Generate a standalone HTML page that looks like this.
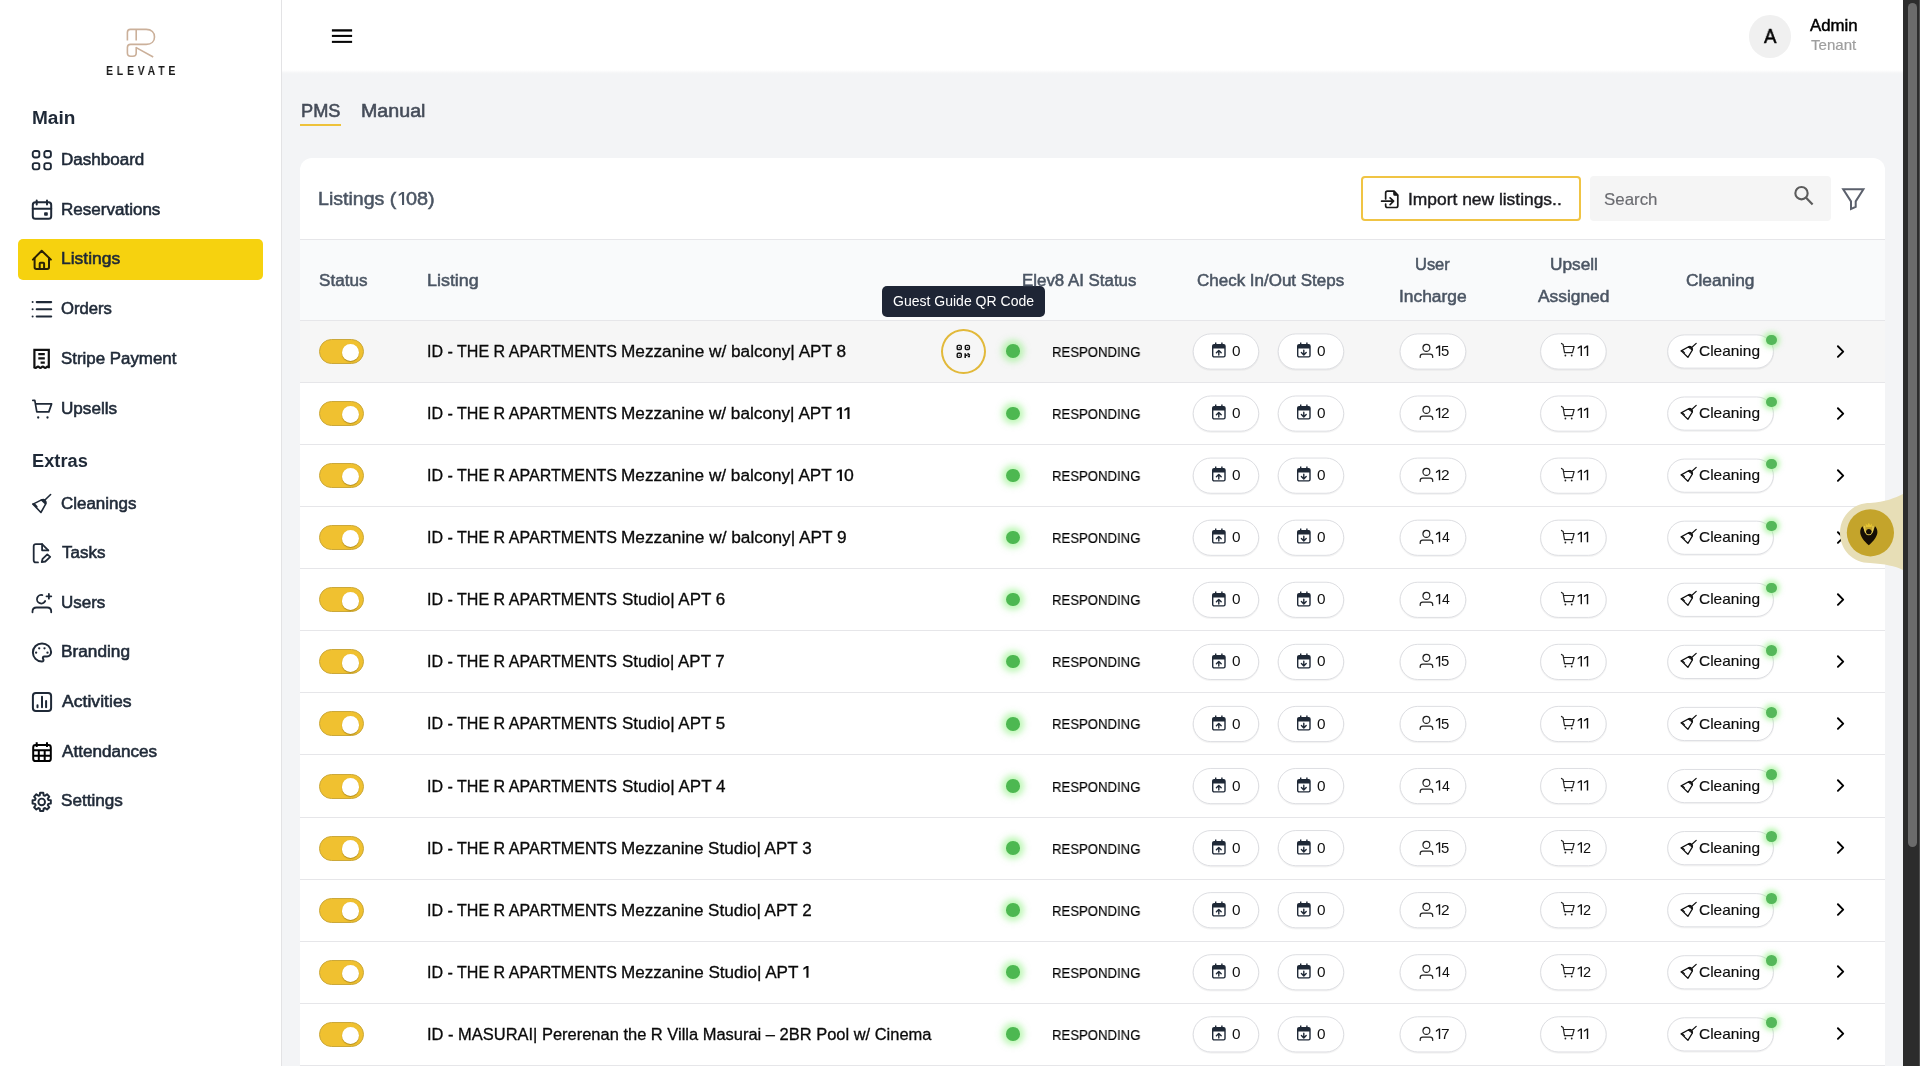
<!DOCTYPE html>
<html lang="en"><head><meta charset="utf-8"><title>Listings</title>
<style>
html,body{margin:0;padding:0;}
body{width:1920px;height:1066px;overflow:hidden;background:#f3f4f6;font-family:"Liberation Sans",sans-serif;}
#root{position:relative;width:1920px;height:1066px;overflow:hidden;background:#f3f4f6;}
.t{position:absolute;white-space:pre;transform-origin:0 0;will-change:transform;font-family:"Liberation Sans",sans-serif;}
.a{position:absolute;}
.pill{position:absolute;box-sizing:border-box;border:1px solid #dfe0e4;border-radius:20px;background:#fff;box-shadow:0 1px 2px rgba(0,0,0,.06);}
.tog{position:absolute;box-sizing:border-box;width:45px;height:25px;border-radius:13px;background:#f0c130;border:1px solid #cba83a;}
.knob{position:absolute;width:17.5px;height:17.5px;border-radius:50%;background:#fff;box-shadow:0 1px 1px rgba(120,90,0,.5);}
.dot{position:absolute;width:13.6px;height:13.6px;border-radius:50%;background:#4db851;box-shadow:0 0 6px 4px rgba(125,240,110,.5);}
.sdot{position:absolute;width:10.6px;height:10.6px;border-radius:50%;background:#55b85a;box-shadow:0 0 5px 3px rgba(125,240,110,.5);}
svg{position:absolute;overflow:visible;}

</style></head>
<body>
<div id="root">
<div class="a" style="left:0;top:0;width:281px;height:1066px;background:#fff;"></div>
<div class="a" style="left:281px;top:0;width:1px;height:1066px;background:#e3e3e5;"></div>
<div class="a" style="left:282px;top:0;width:1621px;height:70px;background:#fff;"></div>
<div class="a" style="left:282px;top:70px;width:1621px;height:4px;background:linear-gradient(#fff,#fbfbfc 30%,#f5f6f7 70%,#f3f4f6);"></div>
<div class="a" style="left:1903px;top:0;width:17px;height:1066px;background:#2c2c2c;"></div>
<div class="a" style="left:1919px;top:0;width:1px;height:1066px;background:#4f4f4f;"></div>
<div class="a" style="left:1908px;top:3px;width:8.5px;height:844px;background:#6b6b6b;border-radius:4.5px;"></div>
<svg style="left:0;top:0" width="400" height="60" viewBox="0 0 400 60"><rect x="331.9" y="29.25" width="20.2" height="2.3" fill="#050505"/><rect x="331.9" y="34.9" width="20.2" height="2.05" fill="#050505"/><rect x="331.9" y="40.85" width="20.2" height="2.05" fill="#050505"/></svg>
<div class="a" style="left:1748.5px;top:15px;width:42.5px;height:42.5px;border-radius:50%;background:#f0f0f0;"></div>
<div class="a" style="left:300px;top:124px;width:41px;height:2px;background:#eec23a;"></div>
<div class="a" style="left:300px;top:158px;width:1585px;height:920px;background:#fff;border-radius:12px;"></div>
<div class="a" style="left:300px;top:239px;width:1585px;height:1px;background:#e6e6e9;"></div>
<div class="a" style="left:300px;top:240px;width:1585px;height:80px;background:#f9fafb;"></div>
<div class="a" style="left:300px;top:320px;width:1585px;height:1px;background:#e6e6e9;"></div>
<div class="a" style="left:1360.6px;top:176.4px;width:220.2px;height:44.4px;box-sizing:border-box;border:2px solid #f0c444;border-radius:4px;background:#fff;"></div>
<div class="a" style="left:1590px;top:176.2px;width:240.5px;height:44.6px;border-radius:4px;background:#f5f5f5;"></div>
<div class="a" style="left:18px;top:239.3px;width:245px;height:40.7px;border-radius:5px;background:#f6d20f;"></div>
<svg style="left:32.00px;top:150.00px" width="20" height="20" viewBox="0 0 20 20" fill="none" stroke-linecap="round" stroke-linejoin="round" ><rect x="0.75" y="0.95" width="6.6" height="6.5" rx="2.1" stroke="#1f2937" stroke-width="1.9"/><rect x="0.75" y="13.1" width="6.6" height="6.3" rx="2.1" stroke="#1f2937" stroke-width="1.9"/><rect x="12.3" y="0.95" width="6.6" height="6.5" rx="2.1" stroke="#1f2937" stroke-width="1.9"/><rect x="12.3" y="13.1" width="6.6" height="6.3" rx="2.1" stroke="#1f2937" stroke-width="1.9"/></svg>
<svg style="left:32.00px;top:199.70px" width="20" height="20" viewBox="0 0 20 20" fill="none" stroke-linecap="round" stroke-linejoin="round" ><rect x="0.8" y="2.3" width="18.4" height="16.5" rx="2.6" stroke="#1f2937" stroke-width="2"/><path d="M0.8 8.7H19.2M4.7 0.6V4.6M15 0.6V4.6" stroke="#1f2937" stroke-width="2"/><rect x="12.1" y="12.2" width="3.7" height="3.6" rx="0.8" fill="#1f2937"/></svg>
<svg style="left:32.00px;top:249.40px" width="20" height="20" viewBox="0 0 20 20" fill="none" stroke-linecap="round" stroke-linejoin="round" ><g transform="translate(0,0.9)"><path d="M0.9 9.7L9.7 0.9L18.9 9.7" stroke="#2a2105" stroke-width="2"/><path d="M2.6 8.2V17.3Q2.6 19.1 4.4 19.1H15.2Q17 19.1 17 17.3V8.2" stroke="#2a2105" stroke-width="2"/><path d="M7.7 19V13.6Q7.7 12.8 8.5 12.8H11.3Q12.1 12.8 12.1 13.6V19" stroke="#2a2105" stroke-width="2"/></g></svg>
<svg style="left:32.00px;top:299.10px" width="20" height="20" viewBox="0 0 20 20" fill="none" stroke-linecap="round" stroke-linejoin="round" ><path d="M4.7 3.1H19.2" stroke="#1f2937" stroke-width="2.05"/><circle cx="0.6" cy="3.1" r="1.0" fill="#1f2937"/><path d="M4.7 10.2H19.2" stroke="#1f2937" stroke-width="2.05"/><circle cx="0.6" cy="10.2" r="1.0" fill="#1f2937"/><path d="M4.7 17.4H19.2" stroke="#1f2937" stroke-width="2.05"/><circle cx="0.6" cy="17.4" r="1.0" fill="#1f2937"/></svg>
<svg style="left:32.00px;top:348.80px" width="20" height="20" viewBox="0 0 20 20" fill="none" stroke-linecap="round" stroke-linejoin="round" ><path d="M2.4 19.2V0.9H16.8V19.2" stroke="#111" stroke-width="2.2" stroke-linejoin="miter" stroke-linecap="butt"/><path d="M2.4 18.3Q3.6 19.6 4.8 18.3Q6 17 7.2 18.3Q8.4 19.6 9.6 18.3Q10.8 17 12 18.3Q13.2 19.6 14.4 18.3Q15.6 17 16.8 18.3" stroke="#111" stroke-width="2.2" stroke-linejoin="miter" stroke-linecap="butt"/><path d="M6.3 5.2H12.8M6.3 9.4H12.8M8.6 13.6H12.8" stroke="#111" stroke-width="2.2" stroke-linejoin="miter" stroke-linecap="butt"/></svg>
<svg style="left:32.00px;top:398.50px" width="20" height="20" viewBox="0 0 20 20" fill="none" stroke-linecap="round" stroke-linejoin="round" ><path d="M0.8 1.3H2.8L4.8 12.9H16.8L19.6 4.9H3.5" stroke="#1f2937" stroke-width="1.7"/><circle cx="6.2" cy="18.5" r="1.15" fill="#1f2937"/><circle cx="15.5" cy="18.5" r="1.15" fill="#1f2937"/></svg>
<svg style="left:32.00px;top:493.30px" width="20" height="20" viewBox="0 0 20 20" fill="none" stroke-linecap="round" stroke-linejoin="round" ><path d="M18.6 1.5L12.7 7.3" stroke="#1f2937" stroke-width="1.6"/><path d="M1 11.1L9.6 6.9Q11.6 5.8 13 7.6Q14.6 9.4 13.6 11.2L8.9 19.5Z" stroke="#1f2937" stroke-width="1.6"/><path d="M9.4 6.9Q12.2 6 13.4 10.6Z" fill="#1f2937" stroke="#1f2937" stroke-width="1.6"/><path d="M1 11.1Q3.8 11.4 4.9 13.8" stroke="#1f2937" stroke-width="1.6"/></svg>
<svg style="left:32.00px;top:543.00px" width="20" height="20" viewBox="0 0 20 20" fill="none" stroke-linecap="round" stroke-linejoin="round" ><path d="M6 19.4H3.9Q1.7 19.4 1.7 17.2V3.3Q1.7 1.1 3.9 1.1H10.1L16.3 7.3" stroke="#1f2937" stroke-width="1.8"/><path d="M10.1 1.1V7.3H16.3" stroke="#1f2937" stroke-width="1.8"/><path d="M9.7 19.2L10.6 15.8L15.3 11.4L18.2 13.9L13.3 18.5Z" stroke="#1f2937" stroke-width="1.8"/></svg>
<svg style="left:32.00px;top:592.70px" width="20" height="20" viewBox="0 0 20 20" fill="none" stroke-linecap="round" stroke-linejoin="round" ><path d="M10.4 2.05A4.3 4.3 0 1 0 13.2 8" stroke="#1f2937" stroke-width="1.8"/><path d="M16.9 0.9V5.7M14.5 3.3H19.3" stroke="#1f2937" stroke-width="1.8"/><path d="M0.5 19.3V18.6Q0.5 14.5 4.6 14.5H15.1Q19.2 14.5 19.2 18.6V19.3" stroke="#1f2937" stroke-width="1.8"/></svg>
<svg style="left:32.00px;top:642.40px" width="20" height="20" viewBox="0 0 20 20" fill="none" stroke-linecap="round" stroke-linejoin="round" ><g transform="translate(0,0.5)"><path d="M10 0.9C4.9 0.9 0.9 4.9 0.9 10C0.9 15 4.9 19.1 9.8 19.1C11.4 19.1 11.9 17.6 11.2 16.6C10.3 15.3 11 14 12.5 14H15C17.5 14 19.1 12 19.1 9.6C19.1 4.6 15 0.9 10 0.9Z" stroke="#1f2937" stroke-width="2"/><circle cx="7.2" cy="5.8" r="1.15" fill="#1f2937"/><circle cx="12.5" cy="5.8" r="1.15" fill="#1f2937"/><circle cx="4.1" cy="10.2" r="1.15" fill="#1f2937"/><circle cx="15.5" cy="10.2" r="1.15" fill="#1f2937"/></g></svg>
<svg style="left:32.00px;top:692.10px" width="20" height="20" viewBox="0 0 20 20" fill="none" stroke-linecap="round" stroke-linejoin="round" ><rect x="0.9" y="0.9" width="18.2" height="18.2" rx="3" stroke="#1f2937" stroke-width="2"/><path d="M5.5 13.3V15.3M10 4.8V15.3M14.1 9V15.3" stroke="#1f2937" stroke-width="2"/></svg>
<svg style="left:32.00px;top:741.80px" width="20" height="20" viewBox="0 0 20 20" fill="none" stroke-linecap="round" stroke-linejoin="round" ><rect x="1.2" y="3.1" width="17.6" height="16" rx="2.4" stroke="#000" stroke-width="2" stroke-linecap="butt"/><path d="M4.7 0.2V5M15 0.2V5M1.2 8.2H18.8M1.2 13.7H18.8M6.8 8.2V19M12.7 8.2V19" stroke="#000" stroke-width="2" stroke-linecap="butt"/></svg>
<svg style="left:32.00px;top:791.50px" width="20" height="20" viewBox="0 0 20 20" fill="none" stroke-linecap="round" stroke-linejoin="round" ><path d="M8.10 0.74L11.30 0.74L11.63 3.27L13.02 3.85L15.05 2.29L17.31 4.55L15.75 6.58L16.33 7.97L18.86 8.30L18.86 11.50L16.33 11.83L15.75 13.22L17.31 15.25L15.05 17.51L13.02 15.95L11.63 16.53L11.30 19.06L8.10 19.06L7.77 16.53L6.38 15.95L4.35 17.51L2.09 15.25L3.65 13.22L3.07 11.83L0.54 11.50L0.54 8.30L3.07 7.97L3.65 6.58L2.09 4.55L4.35 2.29L6.38 3.85L7.77 3.27Z" stroke="#1f2937" stroke-width="1.9"/><circle cx="9.7" cy="9.9" r="3.3" stroke="#1f2937" stroke-width="1.9"/></svg>
<svg style="left:0.00px;top:0.00px" width="200" height="70" viewBox="0 0 200 70" fill="none" stroke-linecap="round" stroke-linejoin="round" ><path d="M127.4 40.4V32.4Q127.4 29.4 130.4 29.4H146.2C151.6 29.4 154.5 32.6 154.5 36.9C154.5 41.2 151.6 44.4 146.2 44.4H130.6Q127.4 44.4 127.4 47.6V53Q127.4 56.3 130.7 56.3H132.9Q136.2 56.3 136.2 53V47.6L153.2 57M136.2 29.4V40.4" stroke="#cbb09a" stroke-width="1.6" stroke-linecap="butt"/></svg>
<div class="a" style="left:300px;top:321px;width:1585px;height:61px;background:#f6f6f6;"></div>
<svg style="left:0;top:0" width="1920" height="1066" viewBox="0 0 1920 1066"><rect x="1193.20" y="334.80" width="65.50" height="35.20" rx="17.60" fill="none" stroke="#000" stroke-opacity="0.045" stroke-width="1.6"/><rect x="1278.20" y="334.80" width="65.50" height="35.20" rx="17.60" fill="none" stroke="#000" stroke-opacity="0.045" stroke-width="1.6"/><rect x="1400.10" y="334.80" width="65.70" height="35.20" rx="17.60" fill="none" stroke="#000" stroke-opacity="0.045" stroke-width="1.6"/><rect x="1540.60" y="334.80" width="65.60" height="35.20" rx="17.60" fill="none" stroke="#000" stroke-opacity="0.045" stroke-width="1.6"/><rect x="1667.70" y="335.80" width="105.70" height="33.20" rx="16.60" fill="none" stroke="#000" stroke-opacity="0.045" stroke-width="1.6"/><rect x="1193.20" y="396.88" width="65.50" height="35.20" rx="17.60" fill="none" stroke="#000" stroke-opacity="0.045" stroke-width="1.6"/><rect x="1278.20" y="396.88" width="65.50" height="35.20" rx="17.60" fill="none" stroke="#000" stroke-opacity="0.045" stroke-width="1.6"/><rect x="1400.10" y="396.88" width="65.70" height="35.20" rx="17.60" fill="none" stroke="#000" stroke-opacity="0.045" stroke-width="1.6"/><rect x="1540.60" y="396.88" width="65.60" height="35.20" rx="17.60" fill="none" stroke="#000" stroke-opacity="0.045" stroke-width="1.6"/><rect x="1667.70" y="397.88" width="105.70" height="33.20" rx="16.60" fill="none" stroke="#000" stroke-opacity="0.045" stroke-width="1.6"/><rect x="1193.20" y="458.96" width="65.50" height="35.20" rx="17.60" fill="none" stroke="#000" stroke-opacity="0.045" stroke-width="1.6"/><rect x="1278.20" y="458.96" width="65.50" height="35.20" rx="17.60" fill="none" stroke="#000" stroke-opacity="0.045" stroke-width="1.6"/><rect x="1400.10" y="458.96" width="65.70" height="35.20" rx="17.60" fill="none" stroke="#000" stroke-opacity="0.045" stroke-width="1.6"/><rect x="1540.60" y="458.96" width="65.60" height="35.20" rx="17.60" fill="none" stroke="#000" stroke-opacity="0.045" stroke-width="1.6"/><rect x="1667.70" y="459.96" width="105.70" height="33.20" rx="16.60" fill="none" stroke="#000" stroke-opacity="0.045" stroke-width="1.6"/><rect x="1193.20" y="521.04" width="65.50" height="35.20" rx="17.60" fill="none" stroke="#000" stroke-opacity="0.045" stroke-width="1.6"/><rect x="1278.20" y="521.04" width="65.50" height="35.20" rx="17.60" fill="none" stroke="#000" stroke-opacity="0.045" stroke-width="1.6"/><rect x="1400.10" y="521.04" width="65.70" height="35.20" rx="17.60" fill="none" stroke="#000" stroke-opacity="0.045" stroke-width="1.6"/><rect x="1540.60" y="521.04" width="65.60" height="35.20" rx="17.60" fill="none" stroke="#000" stroke-opacity="0.045" stroke-width="1.6"/><rect x="1667.70" y="522.04" width="105.70" height="33.20" rx="16.60" fill="none" stroke="#000" stroke-opacity="0.045" stroke-width="1.6"/><rect x="1193.20" y="583.12" width="65.50" height="35.20" rx="17.60" fill="none" stroke="#000" stroke-opacity="0.045" stroke-width="1.6"/><rect x="1278.20" y="583.12" width="65.50" height="35.20" rx="17.60" fill="none" stroke="#000" stroke-opacity="0.045" stroke-width="1.6"/><rect x="1400.10" y="583.12" width="65.70" height="35.20" rx="17.60" fill="none" stroke="#000" stroke-opacity="0.045" stroke-width="1.6"/><rect x="1540.60" y="583.12" width="65.60" height="35.20" rx="17.60" fill="none" stroke="#000" stroke-opacity="0.045" stroke-width="1.6"/><rect x="1667.70" y="584.12" width="105.70" height="33.20" rx="16.60" fill="none" stroke="#000" stroke-opacity="0.045" stroke-width="1.6"/><rect x="1193.20" y="645.20" width="65.50" height="35.20" rx="17.60" fill="none" stroke="#000" stroke-opacity="0.045" stroke-width="1.6"/><rect x="1278.20" y="645.20" width="65.50" height="35.20" rx="17.60" fill="none" stroke="#000" stroke-opacity="0.045" stroke-width="1.6"/><rect x="1400.10" y="645.20" width="65.70" height="35.20" rx="17.60" fill="none" stroke="#000" stroke-opacity="0.045" stroke-width="1.6"/><rect x="1540.60" y="645.20" width="65.60" height="35.20" rx="17.60" fill="none" stroke="#000" stroke-opacity="0.045" stroke-width="1.6"/><rect x="1667.70" y="646.20" width="105.70" height="33.20" rx="16.60" fill="none" stroke="#000" stroke-opacity="0.045" stroke-width="1.6"/><rect x="1193.20" y="707.28" width="65.50" height="35.20" rx="17.60" fill="none" stroke="#000" stroke-opacity="0.045" stroke-width="1.6"/><rect x="1278.20" y="707.28" width="65.50" height="35.20" rx="17.60" fill="none" stroke="#000" stroke-opacity="0.045" stroke-width="1.6"/><rect x="1400.10" y="707.28" width="65.70" height="35.20" rx="17.60" fill="none" stroke="#000" stroke-opacity="0.045" stroke-width="1.6"/><rect x="1540.60" y="707.28" width="65.60" height="35.20" rx="17.60" fill="none" stroke="#000" stroke-opacity="0.045" stroke-width="1.6"/><rect x="1667.70" y="708.28" width="105.70" height="33.20" rx="16.60" fill="none" stroke="#000" stroke-opacity="0.045" stroke-width="1.6"/><rect x="1193.20" y="769.36" width="65.50" height="35.20" rx="17.60" fill="none" stroke="#000" stroke-opacity="0.045" stroke-width="1.6"/><rect x="1278.20" y="769.36" width="65.50" height="35.20" rx="17.60" fill="none" stroke="#000" stroke-opacity="0.045" stroke-width="1.6"/><rect x="1400.10" y="769.36" width="65.70" height="35.20" rx="17.60" fill="none" stroke="#000" stroke-opacity="0.045" stroke-width="1.6"/><rect x="1540.60" y="769.36" width="65.60" height="35.20" rx="17.60" fill="none" stroke="#000" stroke-opacity="0.045" stroke-width="1.6"/><rect x="1667.70" y="770.36" width="105.70" height="33.20" rx="16.60" fill="none" stroke="#000" stroke-opacity="0.045" stroke-width="1.6"/><rect x="1193.20" y="831.44" width="65.50" height="35.20" rx="17.60" fill="none" stroke="#000" stroke-opacity="0.045" stroke-width="1.6"/><rect x="1278.20" y="831.44" width="65.50" height="35.20" rx="17.60" fill="none" stroke="#000" stroke-opacity="0.045" stroke-width="1.6"/><rect x="1400.10" y="831.44" width="65.70" height="35.20" rx="17.60" fill="none" stroke="#000" stroke-opacity="0.045" stroke-width="1.6"/><rect x="1540.60" y="831.44" width="65.60" height="35.20" rx="17.60" fill="none" stroke="#000" stroke-opacity="0.045" stroke-width="1.6"/><rect x="1667.70" y="832.44" width="105.70" height="33.20" rx="16.60" fill="none" stroke="#000" stroke-opacity="0.045" stroke-width="1.6"/><rect x="1193.20" y="893.52" width="65.50" height="35.20" rx="17.60" fill="none" stroke="#000" stroke-opacity="0.045" stroke-width="1.6"/><rect x="1278.20" y="893.52" width="65.50" height="35.20" rx="17.60" fill="none" stroke="#000" stroke-opacity="0.045" stroke-width="1.6"/><rect x="1400.10" y="893.52" width="65.70" height="35.20" rx="17.60" fill="none" stroke="#000" stroke-opacity="0.045" stroke-width="1.6"/><rect x="1540.60" y="893.52" width="65.60" height="35.20" rx="17.60" fill="none" stroke="#000" stroke-opacity="0.045" stroke-width="1.6"/><rect x="1667.70" y="894.52" width="105.70" height="33.20" rx="16.60" fill="none" stroke="#000" stroke-opacity="0.045" stroke-width="1.6"/><rect x="1193.20" y="955.60" width="65.50" height="35.20" rx="17.60" fill="none" stroke="#000" stroke-opacity="0.045" stroke-width="1.6"/><rect x="1278.20" y="955.60" width="65.50" height="35.20" rx="17.60" fill="none" stroke="#000" stroke-opacity="0.045" stroke-width="1.6"/><rect x="1400.10" y="955.60" width="65.70" height="35.20" rx="17.60" fill="none" stroke="#000" stroke-opacity="0.045" stroke-width="1.6"/><rect x="1540.60" y="955.60" width="65.60" height="35.20" rx="17.60" fill="none" stroke="#000" stroke-opacity="0.045" stroke-width="1.6"/><rect x="1667.70" y="956.60" width="105.70" height="33.20" rx="16.60" fill="none" stroke="#000" stroke-opacity="0.045" stroke-width="1.6"/><rect x="1193.20" y="1017.68" width="65.50" height="35.20" rx="17.60" fill="none" stroke="#000" stroke-opacity="0.045" stroke-width="1.6"/><rect x="1278.20" y="1017.68" width="65.50" height="35.20" rx="17.60" fill="none" stroke="#000" stroke-opacity="0.045" stroke-width="1.6"/><rect x="1400.10" y="1017.68" width="65.70" height="35.20" rx="17.60" fill="none" stroke="#000" stroke-opacity="0.045" stroke-width="1.6"/><rect x="1540.60" y="1017.68" width="65.60" height="35.20" rx="17.60" fill="none" stroke="#000" stroke-opacity="0.045" stroke-width="1.6"/><rect x="1667.70" y="1018.68" width="105.70" height="33.20" rx="16.60" fill="none" stroke="#000" stroke-opacity="0.045" stroke-width="1.6"/><rect x="1193.20" y="333.90" width="65.50" height="35.20" rx="17.60" fill="#fff" stroke="#dddee2" stroke-width="1"/><rect x="1278.20" y="333.90" width="65.50" height="35.20" rx="17.60" fill="#fff" stroke="#dddee2" stroke-width="1"/><rect x="1400.10" y="333.90" width="65.70" height="35.20" rx="17.60" fill="#fff" stroke="#dddee2" stroke-width="1"/><rect x="1540.60" y="333.90" width="65.60" height="35.20" rx="17.60" fill="#fff" stroke="#dddee2" stroke-width="1"/><rect x="1667.70" y="334.90" width="105.70" height="33.20" rx="16.60" fill="#fff" stroke="#dddee2" stroke-width="1"/><rect x="1193.20" y="395.98" width="65.50" height="35.20" rx="17.60" fill="#fff" stroke="#dddee2" stroke-width="1"/><rect x="1278.20" y="395.98" width="65.50" height="35.20" rx="17.60" fill="#fff" stroke="#dddee2" stroke-width="1"/><rect x="1400.10" y="395.98" width="65.70" height="35.20" rx="17.60" fill="#fff" stroke="#dddee2" stroke-width="1"/><rect x="1540.60" y="395.98" width="65.60" height="35.20" rx="17.60" fill="#fff" stroke="#dddee2" stroke-width="1"/><rect x="1667.70" y="396.98" width="105.70" height="33.20" rx="16.60" fill="#fff" stroke="#dddee2" stroke-width="1"/><rect x="1193.20" y="458.06" width="65.50" height="35.20" rx="17.60" fill="#fff" stroke="#dddee2" stroke-width="1"/><rect x="1278.20" y="458.06" width="65.50" height="35.20" rx="17.60" fill="#fff" stroke="#dddee2" stroke-width="1"/><rect x="1400.10" y="458.06" width="65.70" height="35.20" rx="17.60" fill="#fff" stroke="#dddee2" stroke-width="1"/><rect x="1540.60" y="458.06" width="65.60" height="35.20" rx="17.60" fill="#fff" stroke="#dddee2" stroke-width="1"/><rect x="1667.70" y="459.06" width="105.70" height="33.20" rx="16.60" fill="#fff" stroke="#dddee2" stroke-width="1"/><rect x="1193.20" y="520.14" width="65.50" height="35.20" rx="17.60" fill="#fff" stroke="#dddee2" stroke-width="1"/><rect x="1278.20" y="520.14" width="65.50" height="35.20" rx="17.60" fill="#fff" stroke="#dddee2" stroke-width="1"/><rect x="1400.10" y="520.14" width="65.70" height="35.20" rx="17.60" fill="#fff" stroke="#dddee2" stroke-width="1"/><rect x="1540.60" y="520.14" width="65.60" height="35.20" rx="17.60" fill="#fff" stroke="#dddee2" stroke-width="1"/><rect x="1667.70" y="521.14" width="105.70" height="33.20" rx="16.60" fill="#fff" stroke="#dddee2" stroke-width="1"/><rect x="1193.20" y="582.22" width="65.50" height="35.20" rx="17.60" fill="#fff" stroke="#dddee2" stroke-width="1"/><rect x="1278.20" y="582.22" width="65.50" height="35.20" rx="17.60" fill="#fff" stroke="#dddee2" stroke-width="1"/><rect x="1400.10" y="582.22" width="65.70" height="35.20" rx="17.60" fill="#fff" stroke="#dddee2" stroke-width="1"/><rect x="1540.60" y="582.22" width="65.60" height="35.20" rx="17.60" fill="#fff" stroke="#dddee2" stroke-width="1"/><rect x="1667.70" y="583.22" width="105.70" height="33.20" rx="16.60" fill="#fff" stroke="#dddee2" stroke-width="1"/><rect x="1193.20" y="644.30" width="65.50" height="35.20" rx="17.60" fill="#fff" stroke="#dddee2" stroke-width="1"/><rect x="1278.20" y="644.30" width="65.50" height="35.20" rx="17.60" fill="#fff" stroke="#dddee2" stroke-width="1"/><rect x="1400.10" y="644.30" width="65.70" height="35.20" rx="17.60" fill="#fff" stroke="#dddee2" stroke-width="1"/><rect x="1540.60" y="644.30" width="65.60" height="35.20" rx="17.60" fill="#fff" stroke="#dddee2" stroke-width="1"/><rect x="1667.70" y="645.30" width="105.70" height="33.20" rx="16.60" fill="#fff" stroke="#dddee2" stroke-width="1"/><rect x="1193.20" y="706.38" width="65.50" height="35.20" rx="17.60" fill="#fff" stroke="#dddee2" stroke-width="1"/><rect x="1278.20" y="706.38" width="65.50" height="35.20" rx="17.60" fill="#fff" stroke="#dddee2" stroke-width="1"/><rect x="1400.10" y="706.38" width="65.70" height="35.20" rx="17.60" fill="#fff" stroke="#dddee2" stroke-width="1"/><rect x="1540.60" y="706.38" width="65.60" height="35.20" rx="17.60" fill="#fff" stroke="#dddee2" stroke-width="1"/><rect x="1667.70" y="707.38" width="105.70" height="33.20" rx="16.60" fill="#fff" stroke="#dddee2" stroke-width="1"/><rect x="1193.20" y="768.46" width="65.50" height="35.20" rx="17.60" fill="#fff" stroke="#dddee2" stroke-width="1"/><rect x="1278.20" y="768.46" width="65.50" height="35.20" rx="17.60" fill="#fff" stroke="#dddee2" stroke-width="1"/><rect x="1400.10" y="768.46" width="65.70" height="35.20" rx="17.60" fill="#fff" stroke="#dddee2" stroke-width="1"/><rect x="1540.60" y="768.46" width="65.60" height="35.20" rx="17.60" fill="#fff" stroke="#dddee2" stroke-width="1"/><rect x="1667.70" y="769.46" width="105.70" height="33.20" rx="16.60" fill="#fff" stroke="#dddee2" stroke-width="1"/><rect x="1193.20" y="830.54" width="65.50" height="35.20" rx="17.60" fill="#fff" stroke="#dddee2" stroke-width="1"/><rect x="1278.20" y="830.54" width="65.50" height="35.20" rx="17.60" fill="#fff" stroke="#dddee2" stroke-width="1"/><rect x="1400.10" y="830.54" width="65.70" height="35.20" rx="17.60" fill="#fff" stroke="#dddee2" stroke-width="1"/><rect x="1540.60" y="830.54" width="65.60" height="35.20" rx="17.60" fill="#fff" stroke="#dddee2" stroke-width="1"/><rect x="1667.70" y="831.54" width="105.70" height="33.20" rx="16.60" fill="#fff" stroke="#dddee2" stroke-width="1"/><rect x="1193.20" y="892.62" width="65.50" height="35.20" rx="17.60" fill="#fff" stroke="#dddee2" stroke-width="1"/><rect x="1278.20" y="892.62" width="65.50" height="35.20" rx="17.60" fill="#fff" stroke="#dddee2" stroke-width="1"/><rect x="1400.10" y="892.62" width="65.70" height="35.20" rx="17.60" fill="#fff" stroke="#dddee2" stroke-width="1"/><rect x="1540.60" y="892.62" width="65.60" height="35.20" rx="17.60" fill="#fff" stroke="#dddee2" stroke-width="1"/><rect x="1667.70" y="893.62" width="105.70" height="33.20" rx="16.60" fill="#fff" stroke="#dddee2" stroke-width="1"/><rect x="1193.20" y="954.70" width="65.50" height="35.20" rx="17.60" fill="#fff" stroke="#dddee2" stroke-width="1"/><rect x="1278.20" y="954.70" width="65.50" height="35.20" rx="17.60" fill="#fff" stroke="#dddee2" stroke-width="1"/><rect x="1400.10" y="954.70" width="65.70" height="35.20" rx="17.60" fill="#fff" stroke="#dddee2" stroke-width="1"/><rect x="1540.60" y="954.70" width="65.60" height="35.20" rx="17.60" fill="#fff" stroke="#dddee2" stroke-width="1"/><rect x="1667.70" y="955.70" width="105.70" height="33.20" rx="16.60" fill="#fff" stroke="#dddee2" stroke-width="1"/><rect x="1193.20" y="1016.78" width="65.50" height="35.20" rx="17.60" fill="#fff" stroke="#dddee2" stroke-width="1"/><rect x="1278.20" y="1016.78" width="65.50" height="35.20" rx="17.60" fill="#fff" stroke="#dddee2" stroke-width="1"/><rect x="1400.10" y="1016.78" width="65.70" height="35.20" rx="17.60" fill="#fff" stroke="#dddee2" stroke-width="1"/><rect x="1540.60" y="1016.78" width="65.60" height="35.20" rx="17.60" fill="#fff" stroke="#dddee2" stroke-width="1"/><rect x="1667.70" y="1017.78" width="105.70" height="33.20" rx="16.60" fill="#fff" stroke="#dddee2" stroke-width="1"/></svg>
<div class="a" style="left:300px;top:382px;width:1585px;height:1px;background:#e6e6e9;"></div>
<div class="tog" style="left:319px;top:338.95px;"></div>
<div class="knob" style="left:341.6px;top:343.75px;"></div>
<div class="dot" style="left:1006px;top:344.45px;"></div>
<svg style="left:1211.60px;top:342.25px" width="14" height="16" viewBox="0 0 14 16" fill="none" stroke-linecap="round" stroke-linejoin="round" ><rect x="0.7" y="2.7" width="12.3" height="12.2" rx="1.4" stroke="#1f2937" stroke-width="1.4"/><path d="M0.7 4.1Q0.7 2.7 2.1 2.7H11.6Q13 2.7 13 4.1V6.4H0.7Z" fill="#1f2937"/><path d="M3.7 0.6V3M9.9 0.6V3" stroke="#1f2937" stroke-width="1.4" stroke-linecap="butt"/><path d="M6.8 13V8.6M4.4 10.8L6.8 8.4L9.2 10.8" stroke="#1f2937" stroke-width="1.4"/></svg>
<svg style="left:1297.10px;top:342.25px" width="14" height="16" viewBox="0 0 14 16" fill="none" stroke-linecap="round" stroke-linejoin="round" ><rect x="0.7" y="2.7" width="12.3" height="12.2" rx="1.4" stroke="#1f2937" stroke-width="1.4"/><path d="M0.7 4.1Q0.7 2.7 2.1 2.7H11.6Q13 2.7 13 4.1V6.4H0.7Z" fill="#1f2937"/><path d="M3.7 0.6V3M9.9 0.6V3" stroke="#1f2937" stroke-width="1.4" stroke-linecap="butt"/><path d="M6.8 8.3V12.7M4.4 10.5L6.8 12.9L9.2 10.5" stroke="#1f2937" stroke-width="1.4"/></svg>
<svg style="left:1419.90px;top:344.00px" width="13" height="14" viewBox="0 0 13 14" fill="none" stroke-linecap="round" stroke-linejoin="round" ><circle cx="6.4" cy="3.9" r="3.45" stroke="#222" stroke-width="1.2"/><path d="M0.2 13.4V12.6Q0.2 10.1 2.7 10.1H10.2Q12.7 10.1 12.7 12.6V13.4" stroke="#222" stroke-width="1.2"/></svg>

<svg style="left:1560.50px;top:343.45px" width="14" height="14" viewBox="0 0 14 14" fill="none" stroke-linecap="round" stroke-linejoin="round" ><path d="M0.5 0.4L2.1 1.4L3.5 9.7H11.5L13.1 3.5H2.5" stroke="#222" stroke-width="1.2"/><circle cx="4.4" cy="12.5" r="0.9" fill="#222"/><circle cx="10.7" cy="12.5" r="0.9" fill="#222"/></svg>


<svg style="left:1681.40px;top:342.95px" width="16" height="15" viewBox="0 0 16 15" fill="none" stroke-linecap="round" stroke-linejoin="round" ><path d="M15.2 0.4L10.4 4.8" stroke="#111" stroke-width="1.25"/><path d="M0.2 7.9L7.6 3.8Q9.2 3 10.6 4.4Q12 5.8 11.3 7.2L6.9 14.3Z" stroke="#111" stroke-width="1.25"/><path d="M7.4 3.9Q9.8 2.8 11.2 6.8Z" fill="#111" stroke="#111" stroke-width="1"/><path d="M0.2 7.9Q2.6 8 3.6 10" stroke="#111" stroke-width="1.1"/></svg>
<div class="sdot" style="left:1766.2px;top:334.55px;"></div>
<svg style="left:1837.20px;top:345.60px" width="8" height="12" viewBox="0 0 8 12" fill="none" stroke-linecap="round" stroke-linejoin="round" ><path d="M0.9 0.25L6.2 5.55L0.9 10.85" stroke="#000" stroke-width="1.9"/></svg>
<div class="a" style="left:300px;top:444px;width:1585px;height:1px;background:#e6e6e9;"></div>
<div class="tog" style="left:319px;top:401.03px;"></div>
<div class="knob" style="left:341.6px;top:405.83px;"></div>
<div class="dot" style="left:1006px;top:406.53px;"></div>
<svg style="left:1211.60px;top:404.33px" width="14" height="16" viewBox="0 0 14 16" fill="none" stroke-linecap="round" stroke-linejoin="round" ><rect x="0.7" y="2.7" width="12.3" height="12.2" rx="1.4" stroke="#1f2937" stroke-width="1.4"/><path d="M0.7 4.1Q0.7 2.7 2.1 2.7H11.6Q13 2.7 13 4.1V6.4H0.7Z" fill="#1f2937"/><path d="M3.7 0.6V3M9.9 0.6V3" stroke="#1f2937" stroke-width="1.4" stroke-linecap="butt"/><path d="M6.8 13V8.6M4.4 10.8L6.8 8.4L9.2 10.8" stroke="#1f2937" stroke-width="1.4"/></svg>
<svg style="left:1297.10px;top:404.33px" width="14" height="16" viewBox="0 0 14 16" fill="none" stroke-linecap="round" stroke-linejoin="round" ><rect x="0.7" y="2.7" width="12.3" height="12.2" rx="1.4" stroke="#1f2937" stroke-width="1.4"/><path d="M0.7 4.1Q0.7 2.7 2.1 2.7H11.6Q13 2.7 13 4.1V6.4H0.7Z" fill="#1f2937"/><path d="M3.7 0.6V3M9.9 0.6V3" stroke="#1f2937" stroke-width="1.4" stroke-linecap="butt"/><path d="M6.8 8.3V12.7M4.4 10.5L6.8 12.9L9.2 10.5" stroke="#1f2937" stroke-width="1.4"/></svg>
<svg style="left:1419.90px;top:406.08px" width="13" height="14" viewBox="0 0 13 14" fill="none" stroke-linecap="round" stroke-linejoin="round" ><circle cx="6.4" cy="3.9" r="3.45" stroke="#222" stroke-width="1.2"/><path d="M0.2 13.4V12.6Q0.2 10.1 2.7 10.1H10.2Q12.7 10.1 12.7 12.6V13.4" stroke="#222" stroke-width="1.2"/></svg>

<svg style="left:1560.50px;top:405.53px" width="14" height="14" viewBox="0 0 14 14" fill="none" stroke-linecap="round" stroke-linejoin="round" ><path d="M0.5 0.4L2.1 1.4L3.5 9.7H11.5L13.1 3.5H2.5" stroke="#222" stroke-width="1.2"/><circle cx="4.4" cy="12.5" r="0.9" fill="#222"/><circle cx="10.7" cy="12.5" r="0.9" fill="#222"/></svg>


<svg style="left:1681.40px;top:405.03px" width="16" height="15" viewBox="0 0 16 15" fill="none" stroke-linecap="round" stroke-linejoin="round" ><path d="M15.2 0.4L10.4 4.8" stroke="#111" stroke-width="1.25"/><path d="M0.2 7.9L7.6 3.8Q9.2 3 10.6 4.4Q12 5.8 11.3 7.2L6.9 14.3Z" stroke="#111" stroke-width="1.25"/><path d="M7.4 3.9Q9.8 2.8 11.2 6.8Z" fill="#111" stroke="#111" stroke-width="1"/><path d="M0.2 7.9Q2.6 8 3.6 10" stroke="#111" stroke-width="1.1"/></svg>
<div class="sdot" style="left:1766.2px;top:396.63px;"></div>
<svg style="left:1837.20px;top:407.68px" width="8" height="12" viewBox="0 0 8 12" fill="none" stroke-linecap="round" stroke-linejoin="round" ><path d="M0.9 0.25L6.2 5.55L0.9 10.85" stroke="#000" stroke-width="1.9"/></svg>
<div class="a" style="left:300px;top:506px;width:1585px;height:1px;background:#e6e6e9;"></div>
<div class="tog" style="left:319px;top:463.11px;"></div>
<div class="knob" style="left:341.6px;top:467.91px;"></div>
<div class="dot" style="left:1006px;top:468.61px;"></div>
<svg style="left:1211.60px;top:466.41px" width="14" height="16" viewBox="0 0 14 16" fill="none" stroke-linecap="round" stroke-linejoin="round" ><rect x="0.7" y="2.7" width="12.3" height="12.2" rx="1.4" stroke="#1f2937" stroke-width="1.4"/><path d="M0.7 4.1Q0.7 2.7 2.1 2.7H11.6Q13 2.7 13 4.1V6.4H0.7Z" fill="#1f2937"/><path d="M3.7 0.6V3M9.9 0.6V3" stroke="#1f2937" stroke-width="1.4" stroke-linecap="butt"/><path d="M6.8 13V8.6M4.4 10.8L6.8 8.4L9.2 10.8" stroke="#1f2937" stroke-width="1.4"/></svg>
<svg style="left:1297.10px;top:466.41px" width="14" height="16" viewBox="0 0 14 16" fill="none" stroke-linecap="round" stroke-linejoin="round" ><rect x="0.7" y="2.7" width="12.3" height="12.2" rx="1.4" stroke="#1f2937" stroke-width="1.4"/><path d="M0.7 4.1Q0.7 2.7 2.1 2.7H11.6Q13 2.7 13 4.1V6.4H0.7Z" fill="#1f2937"/><path d="M3.7 0.6V3M9.9 0.6V3" stroke="#1f2937" stroke-width="1.4" stroke-linecap="butt"/><path d="M6.8 8.3V12.7M4.4 10.5L6.8 12.9L9.2 10.5" stroke="#1f2937" stroke-width="1.4"/></svg>
<svg style="left:1419.90px;top:468.16px" width="13" height="14" viewBox="0 0 13 14" fill="none" stroke-linecap="round" stroke-linejoin="round" ><circle cx="6.4" cy="3.9" r="3.45" stroke="#222" stroke-width="1.2"/><path d="M0.2 13.4V12.6Q0.2 10.1 2.7 10.1H10.2Q12.7 10.1 12.7 12.6V13.4" stroke="#222" stroke-width="1.2"/></svg>

<svg style="left:1560.50px;top:467.61px" width="14" height="14" viewBox="0 0 14 14" fill="none" stroke-linecap="round" stroke-linejoin="round" ><path d="M0.5 0.4L2.1 1.4L3.5 9.7H11.5L13.1 3.5H2.5" stroke="#222" stroke-width="1.2"/><circle cx="4.4" cy="12.5" r="0.9" fill="#222"/><circle cx="10.7" cy="12.5" r="0.9" fill="#222"/></svg>


<svg style="left:1681.40px;top:467.11px" width="16" height="15" viewBox="0 0 16 15" fill="none" stroke-linecap="round" stroke-linejoin="round" ><path d="M15.2 0.4L10.4 4.8" stroke="#111" stroke-width="1.25"/><path d="M0.2 7.9L7.6 3.8Q9.2 3 10.6 4.4Q12 5.8 11.3 7.2L6.9 14.3Z" stroke="#111" stroke-width="1.25"/><path d="M7.4 3.9Q9.8 2.8 11.2 6.8Z" fill="#111" stroke="#111" stroke-width="1"/><path d="M0.2 7.9Q2.6 8 3.6 10" stroke="#111" stroke-width="1.1"/></svg>
<div class="sdot" style="left:1766.2px;top:458.71px;"></div>
<svg style="left:1837.20px;top:469.76px" width="8" height="12" viewBox="0 0 8 12" fill="none" stroke-linecap="round" stroke-linejoin="round" ><path d="M0.9 0.25L6.2 5.55L0.9 10.85" stroke="#000" stroke-width="1.9"/></svg>
<div class="a" style="left:300px;top:568px;width:1585px;height:1px;background:#e6e6e9;"></div>
<div class="tog" style="left:319px;top:525.19px;"></div>
<div class="knob" style="left:341.6px;top:529.99px;"></div>
<div class="dot" style="left:1006px;top:530.69px;"></div>
<svg style="left:1211.60px;top:528.49px" width="14" height="16" viewBox="0 0 14 16" fill="none" stroke-linecap="round" stroke-linejoin="round" ><rect x="0.7" y="2.7" width="12.3" height="12.2" rx="1.4" stroke="#1f2937" stroke-width="1.4"/><path d="M0.7 4.1Q0.7 2.7 2.1 2.7H11.6Q13 2.7 13 4.1V6.4H0.7Z" fill="#1f2937"/><path d="M3.7 0.6V3M9.9 0.6V3" stroke="#1f2937" stroke-width="1.4" stroke-linecap="butt"/><path d="M6.8 13V8.6M4.4 10.8L6.8 8.4L9.2 10.8" stroke="#1f2937" stroke-width="1.4"/></svg>
<svg style="left:1297.10px;top:528.49px" width="14" height="16" viewBox="0 0 14 16" fill="none" stroke-linecap="round" stroke-linejoin="round" ><rect x="0.7" y="2.7" width="12.3" height="12.2" rx="1.4" stroke="#1f2937" stroke-width="1.4"/><path d="M0.7 4.1Q0.7 2.7 2.1 2.7H11.6Q13 2.7 13 4.1V6.4H0.7Z" fill="#1f2937"/><path d="M3.7 0.6V3M9.9 0.6V3" stroke="#1f2937" stroke-width="1.4" stroke-linecap="butt"/><path d="M6.8 8.3V12.7M4.4 10.5L6.8 12.9L9.2 10.5" stroke="#1f2937" stroke-width="1.4"/></svg>
<svg style="left:1419.90px;top:530.24px" width="13" height="14" viewBox="0 0 13 14" fill="none" stroke-linecap="round" stroke-linejoin="round" ><circle cx="6.4" cy="3.9" r="3.45" stroke="#222" stroke-width="1.2"/><path d="M0.2 13.4V12.6Q0.2 10.1 2.7 10.1H10.2Q12.7 10.1 12.7 12.6V13.4" stroke="#222" stroke-width="1.2"/></svg>

<svg style="left:1560.50px;top:529.69px" width="14" height="14" viewBox="0 0 14 14" fill="none" stroke-linecap="round" stroke-linejoin="round" ><path d="M0.5 0.4L2.1 1.4L3.5 9.7H11.5L13.1 3.5H2.5" stroke="#222" stroke-width="1.2"/><circle cx="4.4" cy="12.5" r="0.9" fill="#222"/><circle cx="10.7" cy="12.5" r="0.9" fill="#222"/></svg>


<svg style="left:1681.40px;top:529.19px" width="16" height="15" viewBox="0 0 16 15" fill="none" stroke-linecap="round" stroke-linejoin="round" ><path d="M15.2 0.4L10.4 4.8" stroke="#111" stroke-width="1.25"/><path d="M0.2 7.9L7.6 3.8Q9.2 3 10.6 4.4Q12 5.8 11.3 7.2L6.9 14.3Z" stroke="#111" stroke-width="1.25"/><path d="M7.4 3.9Q9.8 2.8 11.2 6.8Z" fill="#111" stroke="#111" stroke-width="1"/><path d="M0.2 7.9Q2.6 8 3.6 10" stroke="#111" stroke-width="1.1"/></svg>
<div class="sdot" style="left:1766.2px;top:520.79px;"></div>
<svg style="left:1837.20px;top:531.84px" width="8" height="12" viewBox="0 0 8 12" fill="none" stroke-linecap="round" stroke-linejoin="round" ><path d="M0.9 0.25L6.2 5.55L0.9 10.85" stroke="#000" stroke-width="1.9"/></svg>
<div class="a" style="left:300px;top:630px;width:1585px;height:1px;background:#e6e6e9;"></div>
<div class="tog" style="left:319px;top:587.27px;"></div>
<div class="knob" style="left:341.6px;top:592.07px;"></div>
<div class="dot" style="left:1006px;top:592.77px;"></div>
<svg style="left:1211.60px;top:590.57px" width="14" height="16" viewBox="0 0 14 16" fill="none" stroke-linecap="round" stroke-linejoin="round" ><rect x="0.7" y="2.7" width="12.3" height="12.2" rx="1.4" stroke="#1f2937" stroke-width="1.4"/><path d="M0.7 4.1Q0.7 2.7 2.1 2.7H11.6Q13 2.7 13 4.1V6.4H0.7Z" fill="#1f2937"/><path d="M3.7 0.6V3M9.9 0.6V3" stroke="#1f2937" stroke-width="1.4" stroke-linecap="butt"/><path d="M6.8 13V8.6M4.4 10.8L6.8 8.4L9.2 10.8" stroke="#1f2937" stroke-width="1.4"/></svg>
<svg style="left:1297.10px;top:590.57px" width="14" height="16" viewBox="0 0 14 16" fill="none" stroke-linecap="round" stroke-linejoin="round" ><rect x="0.7" y="2.7" width="12.3" height="12.2" rx="1.4" stroke="#1f2937" stroke-width="1.4"/><path d="M0.7 4.1Q0.7 2.7 2.1 2.7H11.6Q13 2.7 13 4.1V6.4H0.7Z" fill="#1f2937"/><path d="M3.7 0.6V3M9.9 0.6V3" stroke="#1f2937" stroke-width="1.4" stroke-linecap="butt"/><path d="M6.8 8.3V12.7M4.4 10.5L6.8 12.9L9.2 10.5" stroke="#1f2937" stroke-width="1.4"/></svg>
<svg style="left:1419.90px;top:592.32px" width="13" height="14" viewBox="0 0 13 14" fill="none" stroke-linecap="round" stroke-linejoin="round" ><circle cx="6.4" cy="3.9" r="3.45" stroke="#222" stroke-width="1.2"/><path d="M0.2 13.4V12.6Q0.2 10.1 2.7 10.1H10.2Q12.7 10.1 12.7 12.6V13.4" stroke="#222" stroke-width="1.2"/></svg>

<svg style="left:1560.50px;top:591.77px" width="14" height="14" viewBox="0 0 14 14" fill="none" stroke-linecap="round" stroke-linejoin="round" ><path d="M0.5 0.4L2.1 1.4L3.5 9.7H11.5L13.1 3.5H2.5" stroke="#222" stroke-width="1.2"/><circle cx="4.4" cy="12.5" r="0.9" fill="#222"/><circle cx="10.7" cy="12.5" r="0.9" fill="#222"/></svg>


<svg style="left:1681.40px;top:591.27px" width="16" height="15" viewBox="0 0 16 15" fill="none" stroke-linecap="round" stroke-linejoin="round" ><path d="M15.2 0.4L10.4 4.8" stroke="#111" stroke-width="1.25"/><path d="M0.2 7.9L7.6 3.8Q9.2 3 10.6 4.4Q12 5.8 11.3 7.2L6.9 14.3Z" stroke="#111" stroke-width="1.25"/><path d="M7.4 3.9Q9.8 2.8 11.2 6.8Z" fill="#111" stroke="#111" stroke-width="1"/><path d="M0.2 7.9Q2.6 8 3.6 10" stroke="#111" stroke-width="1.1"/></svg>
<div class="sdot" style="left:1766.2px;top:582.87px;"></div>
<svg style="left:1837.20px;top:593.92px" width="8" height="12" viewBox="0 0 8 12" fill="none" stroke-linecap="round" stroke-linejoin="round" ><path d="M0.9 0.25L6.2 5.55L0.9 10.85" stroke="#000" stroke-width="1.9"/></svg>
<div class="a" style="left:300px;top:692px;width:1585px;height:1px;background:#e6e6e9;"></div>
<div class="tog" style="left:319px;top:649.35px;"></div>
<div class="knob" style="left:341.6px;top:654.15px;"></div>
<div class="dot" style="left:1006px;top:654.85px;"></div>
<svg style="left:1211.60px;top:652.65px" width="14" height="16" viewBox="0 0 14 16" fill="none" stroke-linecap="round" stroke-linejoin="round" ><rect x="0.7" y="2.7" width="12.3" height="12.2" rx="1.4" stroke="#1f2937" stroke-width="1.4"/><path d="M0.7 4.1Q0.7 2.7 2.1 2.7H11.6Q13 2.7 13 4.1V6.4H0.7Z" fill="#1f2937"/><path d="M3.7 0.6V3M9.9 0.6V3" stroke="#1f2937" stroke-width="1.4" stroke-linecap="butt"/><path d="M6.8 13V8.6M4.4 10.8L6.8 8.4L9.2 10.8" stroke="#1f2937" stroke-width="1.4"/></svg>
<svg style="left:1297.10px;top:652.65px" width="14" height="16" viewBox="0 0 14 16" fill="none" stroke-linecap="round" stroke-linejoin="round" ><rect x="0.7" y="2.7" width="12.3" height="12.2" rx="1.4" stroke="#1f2937" stroke-width="1.4"/><path d="M0.7 4.1Q0.7 2.7 2.1 2.7H11.6Q13 2.7 13 4.1V6.4H0.7Z" fill="#1f2937"/><path d="M3.7 0.6V3M9.9 0.6V3" stroke="#1f2937" stroke-width="1.4" stroke-linecap="butt"/><path d="M6.8 8.3V12.7M4.4 10.5L6.8 12.9L9.2 10.5" stroke="#1f2937" stroke-width="1.4"/></svg>
<svg style="left:1419.90px;top:654.40px" width="13" height="14" viewBox="0 0 13 14" fill="none" stroke-linecap="round" stroke-linejoin="round" ><circle cx="6.4" cy="3.9" r="3.45" stroke="#222" stroke-width="1.2"/><path d="M0.2 13.4V12.6Q0.2 10.1 2.7 10.1H10.2Q12.7 10.1 12.7 12.6V13.4" stroke="#222" stroke-width="1.2"/></svg>

<svg style="left:1560.50px;top:653.85px" width="14" height="14" viewBox="0 0 14 14" fill="none" stroke-linecap="round" stroke-linejoin="round" ><path d="M0.5 0.4L2.1 1.4L3.5 9.7H11.5L13.1 3.5H2.5" stroke="#222" stroke-width="1.2"/><circle cx="4.4" cy="12.5" r="0.9" fill="#222"/><circle cx="10.7" cy="12.5" r="0.9" fill="#222"/></svg>


<svg style="left:1681.40px;top:653.35px" width="16" height="15" viewBox="0 0 16 15" fill="none" stroke-linecap="round" stroke-linejoin="round" ><path d="M15.2 0.4L10.4 4.8" stroke="#111" stroke-width="1.25"/><path d="M0.2 7.9L7.6 3.8Q9.2 3 10.6 4.4Q12 5.8 11.3 7.2L6.9 14.3Z" stroke="#111" stroke-width="1.25"/><path d="M7.4 3.9Q9.8 2.8 11.2 6.8Z" fill="#111" stroke="#111" stroke-width="1"/><path d="M0.2 7.9Q2.6 8 3.6 10" stroke="#111" stroke-width="1.1"/></svg>
<div class="sdot" style="left:1766.2px;top:644.95px;"></div>
<svg style="left:1837.20px;top:656.00px" width="8" height="12" viewBox="0 0 8 12" fill="none" stroke-linecap="round" stroke-linejoin="round" ><path d="M0.9 0.25L6.2 5.55L0.9 10.85" stroke="#000" stroke-width="1.9"/></svg>
<div class="a" style="left:300px;top:754px;width:1585px;height:1px;background:#e6e6e9;"></div>
<div class="tog" style="left:319px;top:711.43px;"></div>
<div class="knob" style="left:341.6px;top:716.23px;"></div>
<div class="dot" style="left:1006px;top:716.93px;"></div>
<svg style="left:1211.60px;top:714.73px" width="14" height="16" viewBox="0 0 14 16" fill="none" stroke-linecap="round" stroke-linejoin="round" ><rect x="0.7" y="2.7" width="12.3" height="12.2" rx="1.4" stroke="#1f2937" stroke-width="1.4"/><path d="M0.7 4.1Q0.7 2.7 2.1 2.7H11.6Q13 2.7 13 4.1V6.4H0.7Z" fill="#1f2937"/><path d="M3.7 0.6V3M9.9 0.6V3" stroke="#1f2937" stroke-width="1.4" stroke-linecap="butt"/><path d="M6.8 13V8.6M4.4 10.8L6.8 8.4L9.2 10.8" stroke="#1f2937" stroke-width="1.4"/></svg>
<svg style="left:1297.10px;top:714.73px" width="14" height="16" viewBox="0 0 14 16" fill="none" stroke-linecap="round" stroke-linejoin="round" ><rect x="0.7" y="2.7" width="12.3" height="12.2" rx="1.4" stroke="#1f2937" stroke-width="1.4"/><path d="M0.7 4.1Q0.7 2.7 2.1 2.7H11.6Q13 2.7 13 4.1V6.4H0.7Z" fill="#1f2937"/><path d="M3.7 0.6V3M9.9 0.6V3" stroke="#1f2937" stroke-width="1.4" stroke-linecap="butt"/><path d="M6.8 8.3V12.7M4.4 10.5L6.8 12.9L9.2 10.5" stroke="#1f2937" stroke-width="1.4"/></svg>
<svg style="left:1419.90px;top:716.48px" width="13" height="14" viewBox="0 0 13 14" fill="none" stroke-linecap="round" stroke-linejoin="round" ><circle cx="6.4" cy="3.9" r="3.45" stroke="#222" stroke-width="1.2"/><path d="M0.2 13.4V12.6Q0.2 10.1 2.7 10.1H10.2Q12.7 10.1 12.7 12.6V13.4" stroke="#222" stroke-width="1.2"/></svg>

<svg style="left:1560.50px;top:715.93px" width="14" height="14" viewBox="0 0 14 14" fill="none" stroke-linecap="round" stroke-linejoin="round" ><path d="M0.5 0.4L2.1 1.4L3.5 9.7H11.5L13.1 3.5H2.5" stroke="#222" stroke-width="1.2"/><circle cx="4.4" cy="12.5" r="0.9" fill="#222"/><circle cx="10.7" cy="12.5" r="0.9" fill="#222"/></svg>


<svg style="left:1681.40px;top:715.43px" width="16" height="15" viewBox="0 0 16 15" fill="none" stroke-linecap="round" stroke-linejoin="round" ><path d="M15.2 0.4L10.4 4.8" stroke="#111" stroke-width="1.25"/><path d="M0.2 7.9L7.6 3.8Q9.2 3 10.6 4.4Q12 5.8 11.3 7.2L6.9 14.3Z" stroke="#111" stroke-width="1.25"/><path d="M7.4 3.9Q9.8 2.8 11.2 6.8Z" fill="#111" stroke="#111" stroke-width="1"/><path d="M0.2 7.9Q2.6 8 3.6 10" stroke="#111" stroke-width="1.1"/></svg>
<div class="sdot" style="left:1766.2px;top:707.03px;"></div>
<svg style="left:1837.20px;top:718.08px" width="8" height="12" viewBox="0 0 8 12" fill="none" stroke-linecap="round" stroke-linejoin="round" ><path d="M0.9 0.25L6.2 5.55L0.9 10.85" stroke="#000" stroke-width="1.9"/></svg>
<div class="a" style="left:300px;top:817px;width:1585px;height:1px;background:#e6e6e9;"></div>
<div class="tog" style="left:319px;top:773.51px;"></div>
<div class="knob" style="left:341.6px;top:778.31px;"></div>
<div class="dot" style="left:1006px;top:779.01px;"></div>
<svg style="left:1211.60px;top:776.81px" width="14" height="16" viewBox="0 0 14 16" fill="none" stroke-linecap="round" stroke-linejoin="round" ><rect x="0.7" y="2.7" width="12.3" height="12.2" rx="1.4" stroke="#1f2937" stroke-width="1.4"/><path d="M0.7 4.1Q0.7 2.7 2.1 2.7H11.6Q13 2.7 13 4.1V6.4H0.7Z" fill="#1f2937"/><path d="M3.7 0.6V3M9.9 0.6V3" stroke="#1f2937" stroke-width="1.4" stroke-linecap="butt"/><path d="M6.8 13V8.6M4.4 10.8L6.8 8.4L9.2 10.8" stroke="#1f2937" stroke-width="1.4"/></svg>
<svg style="left:1297.10px;top:776.81px" width="14" height="16" viewBox="0 0 14 16" fill="none" stroke-linecap="round" stroke-linejoin="round" ><rect x="0.7" y="2.7" width="12.3" height="12.2" rx="1.4" stroke="#1f2937" stroke-width="1.4"/><path d="M0.7 4.1Q0.7 2.7 2.1 2.7H11.6Q13 2.7 13 4.1V6.4H0.7Z" fill="#1f2937"/><path d="M3.7 0.6V3M9.9 0.6V3" stroke="#1f2937" stroke-width="1.4" stroke-linecap="butt"/><path d="M6.8 8.3V12.7M4.4 10.5L6.8 12.9L9.2 10.5" stroke="#1f2937" stroke-width="1.4"/></svg>
<svg style="left:1419.90px;top:778.56px" width="13" height="14" viewBox="0 0 13 14" fill="none" stroke-linecap="round" stroke-linejoin="round" ><circle cx="6.4" cy="3.9" r="3.45" stroke="#222" stroke-width="1.2"/><path d="M0.2 13.4V12.6Q0.2 10.1 2.7 10.1H10.2Q12.7 10.1 12.7 12.6V13.4" stroke="#222" stroke-width="1.2"/></svg>

<svg style="left:1560.50px;top:778.01px" width="14" height="14" viewBox="0 0 14 14" fill="none" stroke-linecap="round" stroke-linejoin="round" ><path d="M0.5 0.4L2.1 1.4L3.5 9.7H11.5L13.1 3.5H2.5" stroke="#222" stroke-width="1.2"/><circle cx="4.4" cy="12.5" r="0.9" fill="#222"/><circle cx="10.7" cy="12.5" r="0.9" fill="#222"/></svg>


<svg style="left:1681.40px;top:777.51px" width="16" height="15" viewBox="0 0 16 15" fill="none" stroke-linecap="round" stroke-linejoin="round" ><path d="M15.2 0.4L10.4 4.8" stroke="#111" stroke-width="1.25"/><path d="M0.2 7.9L7.6 3.8Q9.2 3 10.6 4.4Q12 5.8 11.3 7.2L6.9 14.3Z" stroke="#111" stroke-width="1.25"/><path d="M7.4 3.9Q9.8 2.8 11.2 6.8Z" fill="#111" stroke="#111" stroke-width="1"/><path d="M0.2 7.9Q2.6 8 3.6 10" stroke="#111" stroke-width="1.1"/></svg>
<div class="sdot" style="left:1766.2px;top:769.11px;"></div>
<svg style="left:1837.20px;top:780.16px" width="8" height="12" viewBox="0 0 8 12" fill="none" stroke-linecap="round" stroke-linejoin="round" ><path d="M0.9 0.25L6.2 5.55L0.9 10.85" stroke="#000" stroke-width="1.9"/></svg>
<div class="a" style="left:300px;top:879px;width:1585px;height:1px;background:#e6e6e9;"></div>
<div class="tog" style="left:319px;top:835.59px;"></div>
<div class="knob" style="left:341.6px;top:840.39px;"></div>
<div class="dot" style="left:1006px;top:841.09px;"></div>
<svg style="left:1211.60px;top:838.89px" width="14" height="16" viewBox="0 0 14 16" fill="none" stroke-linecap="round" stroke-linejoin="round" ><rect x="0.7" y="2.7" width="12.3" height="12.2" rx="1.4" stroke="#1f2937" stroke-width="1.4"/><path d="M0.7 4.1Q0.7 2.7 2.1 2.7H11.6Q13 2.7 13 4.1V6.4H0.7Z" fill="#1f2937"/><path d="M3.7 0.6V3M9.9 0.6V3" stroke="#1f2937" stroke-width="1.4" stroke-linecap="butt"/><path d="M6.8 13V8.6M4.4 10.8L6.8 8.4L9.2 10.8" stroke="#1f2937" stroke-width="1.4"/></svg>
<svg style="left:1297.10px;top:838.89px" width="14" height="16" viewBox="0 0 14 16" fill="none" stroke-linecap="round" stroke-linejoin="round" ><rect x="0.7" y="2.7" width="12.3" height="12.2" rx="1.4" stroke="#1f2937" stroke-width="1.4"/><path d="M0.7 4.1Q0.7 2.7 2.1 2.7H11.6Q13 2.7 13 4.1V6.4H0.7Z" fill="#1f2937"/><path d="M3.7 0.6V3M9.9 0.6V3" stroke="#1f2937" stroke-width="1.4" stroke-linecap="butt"/><path d="M6.8 8.3V12.7M4.4 10.5L6.8 12.9L9.2 10.5" stroke="#1f2937" stroke-width="1.4"/></svg>
<svg style="left:1419.90px;top:840.64px" width="13" height="14" viewBox="0 0 13 14" fill="none" stroke-linecap="round" stroke-linejoin="round" ><circle cx="6.4" cy="3.9" r="3.45" stroke="#222" stroke-width="1.2"/><path d="M0.2 13.4V12.6Q0.2 10.1 2.7 10.1H10.2Q12.7 10.1 12.7 12.6V13.4" stroke="#222" stroke-width="1.2"/></svg>

<svg style="left:1560.50px;top:840.09px" width="14" height="14" viewBox="0 0 14 14" fill="none" stroke-linecap="round" stroke-linejoin="round" ><path d="M0.5 0.4L2.1 1.4L3.5 9.7H11.5L13.1 3.5H2.5" stroke="#222" stroke-width="1.2"/><circle cx="4.4" cy="12.5" r="0.9" fill="#222"/><circle cx="10.7" cy="12.5" r="0.9" fill="#222"/></svg>

<svg style="left:1681.40px;top:839.59px" width="16" height="15" viewBox="0 0 16 15" fill="none" stroke-linecap="round" stroke-linejoin="round" ><path d="M15.2 0.4L10.4 4.8" stroke="#111" stroke-width="1.25"/><path d="M0.2 7.9L7.6 3.8Q9.2 3 10.6 4.4Q12 5.8 11.3 7.2L6.9 14.3Z" stroke="#111" stroke-width="1.25"/><path d="M7.4 3.9Q9.8 2.8 11.2 6.8Z" fill="#111" stroke="#111" stroke-width="1"/><path d="M0.2 7.9Q2.6 8 3.6 10" stroke="#111" stroke-width="1.1"/></svg>
<div class="sdot" style="left:1766.2px;top:831.19px;"></div>
<svg style="left:1837.20px;top:842.24px" width="8" height="12" viewBox="0 0 8 12" fill="none" stroke-linecap="round" stroke-linejoin="round" ><path d="M0.9 0.25L6.2 5.55L0.9 10.85" stroke="#000" stroke-width="1.9"/></svg>
<div class="a" style="left:300px;top:941px;width:1585px;height:1px;background:#e6e6e9;"></div>
<div class="tog" style="left:319px;top:897.67px;"></div>
<div class="knob" style="left:341.6px;top:902.47px;"></div>
<div class="dot" style="left:1006px;top:903.17px;"></div>
<svg style="left:1211.60px;top:900.97px" width="14" height="16" viewBox="0 0 14 16" fill="none" stroke-linecap="round" stroke-linejoin="round" ><rect x="0.7" y="2.7" width="12.3" height="12.2" rx="1.4" stroke="#1f2937" stroke-width="1.4"/><path d="M0.7 4.1Q0.7 2.7 2.1 2.7H11.6Q13 2.7 13 4.1V6.4H0.7Z" fill="#1f2937"/><path d="M3.7 0.6V3M9.9 0.6V3" stroke="#1f2937" stroke-width="1.4" stroke-linecap="butt"/><path d="M6.8 13V8.6M4.4 10.8L6.8 8.4L9.2 10.8" stroke="#1f2937" stroke-width="1.4"/></svg>
<svg style="left:1297.10px;top:900.97px" width="14" height="16" viewBox="0 0 14 16" fill="none" stroke-linecap="round" stroke-linejoin="round" ><rect x="0.7" y="2.7" width="12.3" height="12.2" rx="1.4" stroke="#1f2937" stroke-width="1.4"/><path d="M0.7 4.1Q0.7 2.7 2.1 2.7H11.6Q13 2.7 13 4.1V6.4H0.7Z" fill="#1f2937"/><path d="M3.7 0.6V3M9.9 0.6V3" stroke="#1f2937" stroke-width="1.4" stroke-linecap="butt"/><path d="M6.8 8.3V12.7M4.4 10.5L6.8 12.9L9.2 10.5" stroke="#1f2937" stroke-width="1.4"/></svg>
<svg style="left:1419.90px;top:902.72px" width="13" height="14" viewBox="0 0 13 14" fill="none" stroke-linecap="round" stroke-linejoin="round" ><circle cx="6.4" cy="3.9" r="3.45" stroke="#222" stroke-width="1.2"/><path d="M0.2 13.4V12.6Q0.2 10.1 2.7 10.1H10.2Q12.7 10.1 12.7 12.6V13.4" stroke="#222" stroke-width="1.2"/></svg>

<svg style="left:1560.50px;top:902.17px" width="14" height="14" viewBox="0 0 14 14" fill="none" stroke-linecap="round" stroke-linejoin="round" ><path d="M0.5 0.4L2.1 1.4L3.5 9.7H11.5L13.1 3.5H2.5" stroke="#222" stroke-width="1.2"/><circle cx="4.4" cy="12.5" r="0.9" fill="#222"/><circle cx="10.7" cy="12.5" r="0.9" fill="#222"/></svg>

<svg style="left:1681.40px;top:901.67px" width="16" height="15" viewBox="0 0 16 15" fill="none" stroke-linecap="round" stroke-linejoin="round" ><path d="M15.2 0.4L10.4 4.8" stroke="#111" stroke-width="1.25"/><path d="M0.2 7.9L7.6 3.8Q9.2 3 10.6 4.4Q12 5.8 11.3 7.2L6.9 14.3Z" stroke="#111" stroke-width="1.25"/><path d="M7.4 3.9Q9.8 2.8 11.2 6.8Z" fill="#111" stroke="#111" stroke-width="1"/><path d="M0.2 7.9Q2.6 8 3.6 10" stroke="#111" stroke-width="1.1"/></svg>
<div class="sdot" style="left:1766.2px;top:893.27px;"></div>
<svg style="left:1837.20px;top:904.32px" width="8" height="12" viewBox="0 0 8 12" fill="none" stroke-linecap="round" stroke-linejoin="round" ><path d="M0.9 0.25L6.2 5.55L0.9 10.85" stroke="#000" stroke-width="1.9"/></svg>
<div class="a" style="left:300px;top:1003px;width:1585px;height:1px;background:#e6e6e9;"></div>
<div class="tog" style="left:319px;top:959.75px;"></div>
<div class="knob" style="left:341.6px;top:964.55px;"></div>
<div class="dot" style="left:1006px;top:965.25px;"></div>
<svg style="left:1211.60px;top:963.05px" width="14" height="16" viewBox="0 0 14 16" fill="none" stroke-linecap="round" stroke-linejoin="round" ><rect x="0.7" y="2.7" width="12.3" height="12.2" rx="1.4" stroke="#1f2937" stroke-width="1.4"/><path d="M0.7 4.1Q0.7 2.7 2.1 2.7H11.6Q13 2.7 13 4.1V6.4H0.7Z" fill="#1f2937"/><path d="M3.7 0.6V3M9.9 0.6V3" stroke="#1f2937" stroke-width="1.4" stroke-linecap="butt"/><path d="M6.8 13V8.6M4.4 10.8L6.8 8.4L9.2 10.8" stroke="#1f2937" stroke-width="1.4"/></svg>
<svg style="left:1297.10px;top:963.05px" width="14" height="16" viewBox="0 0 14 16" fill="none" stroke-linecap="round" stroke-linejoin="round" ><rect x="0.7" y="2.7" width="12.3" height="12.2" rx="1.4" stroke="#1f2937" stroke-width="1.4"/><path d="M0.7 4.1Q0.7 2.7 2.1 2.7H11.6Q13 2.7 13 4.1V6.4H0.7Z" fill="#1f2937"/><path d="M3.7 0.6V3M9.9 0.6V3" stroke="#1f2937" stroke-width="1.4" stroke-linecap="butt"/><path d="M6.8 8.3V12.7M4.4 10.5L6.8 12.9L9.2 10.5" stroke="#1f2937" stroke-width="1.4"/></svg>
<svg style="left:1419.90px;top:964.80px" width="13" height="14" viewBox="0 0 13 14" fill="none" stroke-linecap="round" stroke-linejoin="round" ><circle cx="6.4" cy="3.9" r="3.45" stroke="#222" stroke-width="1.2"/><path d="M0.2 13.4V12.6Q0.2 10.1 2.7 10.1H10.2Q12.7 10.1 12.7 12.6V13.4" stroke="#222" stroke-width="1.2"/></svg>

<svg style="left:1560.50px;top:964.25px" width="14" height="14" viewBox="0 0 14 14" fill="none" stroke-linecap="round" stroke-linejoin="round" ><path d="M0.5 0.4L2.1 1.4L3.5 9.7H11.5L13.1 3.5H2.5" stroke="#222" stroke-width="1.2"/><circle cx="4.4" cy="12.5" r="0.9" fill="#222"/><circle cx="10.7" cy="12.5" r="0.9" fill="#222"/></svg>

<svg style="left:1681.40px;top:963.75px" width="16" height="15" viewBox="0 0 16 15" fill="none" stroke-linecap="round" stroke-linejoin="round" ><path d="M15.2 0.4L10.4 4.8" stroke="#111" stroke-width="1.25"/><path d="M0.2 7.9L7.6 3.8Q9.2 3 10.6 4.4Q12 5.8 11.3 7.2L6.9 14.3Z" stroke="#111" stroke-width="1.25"/><path d="M7.4 3.9Q9.8 2.8 11.2 6.8Z" fill="#111" stroke="#111" stroke-width="1"/><path d="M0.2 7.9Q2.6 8 3.6 10" stroke="#111" stroke-width="1.1"/></svg>
<div class="sdot" style="left:1766.2px;top:955.35px;"></div>
<svg style="left:1837.20px;top:966.40px" width="8" height="12" viewBox="0 0 8 12" fill="none" stroke-linecap="round" stroke-linejoin="round" ><path d="M0.9 0.25L6.2 5.55L0.9 10.85" stroke="#000" stroke-width="1.9"/></svg>
<div class="a" style="left:300px;top:1065px;width:1585px;height:1px;background:#e6e6e9;"></div>
<div class="tog" style="left:319px;top:1021.83px;"></div>
<div class="knob" style="left:341.6px;top:1026.63px;"></div>
<div class="dot" style="left:1006px;top:1027.33px;"></div>
<svg style="left:1211.60px;top:1025.13px" width="14" height="16" viewBox="0 0 14 16" fill="none" stroke-linecap="round" stroke-linejoin="round" ><rect x="0.7" y="2.7" width="12.3" height="12.2" rx="1.4" stroke="#1f2937" stroke-width="1.4"/><path d="M0.7 4.1Q0.7 2.7 2.1 2.7H11.6Q13 2.7 13 4.1V6.4H0.7Z" fill="#1f2937"/><path d="M3.7 0.6V3M9.9 0.6V3" stroke="#1f2937" stroke-width="1.4" stroke-linecap="butt"/><path d="M6.8 13V8.6M4.4 10.8L6.8 8.4L9.2 10.8" stroke="#1f2937" stroke-width="1.4"/></svg>
<svg style="left:1297.10px;top:1025.13px" width="14" height="16" viewBox="0 0 14 16" fill="none" stroke-linecap="round" stroke-linejoin="round" ><rect x="0.7" y="2.7" width="12.3" height="12.2" rx="1.4" stroke="#1f2937" stroke-width="1.4"/><path d="M0.7 4.1Q0.7 2.7 2.1 2.7H11.6Q13 2.7 13 4.1V6.4H0.7Z" fill="#1f2937"/><path d="M3.7 0.6V3M9.9 0.6V3" stroke="#1f2937" stroke-width="1.4" stroke-linecap="butt"/><path d="M6.8 8.3V12.7M4.4 10.5L6.8 12.9L9.2 10.5" stroke="#1f2937" stroke-width="1.4"/></svg>
<svg style="left:1419.90px;top:1026.88px" width="13" height="14" viewBox="0 0 13 14" fill="none" stroke-linecap="round" stroke-linejoin="round" ><circle cx="6.4" cy="3.9" r="3.45" stroke="#222" stroke-width="1.2"/><path d="M0.2 13.4V12.6Q0.2 10.1 2.7 10.1H10.2Q12.7 10.1 12.7 12.6V13.4" stroke="#222" stroke-width="1.2"/></svg>

<svg style="left:1560.50px;top:1026.33px" width="14" height="14" viewBox="0 0 14 14" fill="none" stroke-linecap="round" stroke-linejoin="round" ><path d="M0.5 0.4L2.1 1.4L3.5 9.7H11.5L13.1 3.5H2.5" stroke="#222" stroke-width="1.2"/><circle cx="4.4" cy="12.5" r="0.9" fill="#222"/><circle cx="10.7" cy="12.5" r="0.9" fill="#222"/></svg>


<svg style="left:1681.40px;top:1025.83px" width="16" height="15" viewBox="0 0 16 15" fill="none" stroke-linecap="round" stroke-linejoin="round" ><path d="M15.2 0.4L10.4 4.8" stroke="#111" stroke-width="1.25"/><path d="M0.2 7.9L7.6 3.8Q9.2 3 10.6 4.4Q12 5.8 11.3 7.2L6.9 14.3Z" stroke="#111" stroke-width="1.25"/><path d="M7.4 3.9Q9.8 2.8 11.2 6.8Z" fill="#111" stroke="#111" stroke-width="1"/><path d="M0.2 7.9Q2.6 8 3.6 10" stroke="#111" stroke-width="1.1"/></svg>
<div class="sdot" style="left:1766.2px;top:1017.43px;"></div>
<svg style="left:1837.20px;top:1028.48px" width="8" height="12" viewBox="0 0 8 12" fill="none" stroke-linecap="round" stroke-linejoin="round" ><path d="M0.9 0.25L6.2 5.55L0.9 10.85" stroke="#000" stroke-width="1.9"/></svg>
<div class="a" style="left:941px;top:328.6px;width:44.8px;height:45px;box-sizing:border-box;border:2px solid #e2b93a;border-radius:50%;"></div>
<svg style="left:956.00px;top:344.00px" width="15" height="15" viewBox="0 0 15 15" fill="none" stroke-linecap="round" stroke-linejoin="round" ><rect x="1.2" y="1.4" width="4.1" height="4.1" rx="1.1" stroke="#111" stroke-width="1.4"/><rect x="2.75" y="2.95" width="1" height="1" fill="#111"/><rect x="9.299999999999999" y="1.4" width="4.1" height="4.1" rx="1.1" stroke="#111" stroke-width="1.4"/><rect x="10.85" y="2.95" width="1" height="1" fill="#111"/><rect x="1.2" y="9.299999999999999" width="4.1" height="4.1" rx="1.1" stroke="#111" stroke-width="1.4"/><rect x="2.75" y="10.85" width="1" height="1" fill="#111"/><path d="M9.2 14V9.3M9.2 11.2H11.6M11.6 9.2L13.8 11.4M11.8 12.4H14" stroke="#111" stroke-width="1.5" stroke-linecap="butt"/></svg>
<div class="a" style="left:882px;top:286.4px;width:163px;height:30.6px;border-radius:5px;background:#1e2535;"></div>
<svg style="left:1381.20px;top:190.10px" width="18" height="19" viewBox="0 0 18 19" fill="none" stroke-linecap="round" stroke-linejoin="round" ><path d="M4.65 9.00V3.00Q4.65 1.20 6.40 1.20H13.10L16.80 5.20V15.70Q16.80 17.50 15.00 17.50H6.40Q4.65 17.50 4.65 15.70V14.00" stroke="#1a1a1a" stroke-width="1.7"/><path d="M12.80 1.40V4.20Q12.80 5.20 13.80 5.20H16.60Z" fill="#1a1a1a" stroke="#1a1a1a" stroke-width="1.2"/><path d="M0.60 11.20H12.40M9.10 7.80L12.60 11.20L9.10 14.60" stroke="#1a1a1a" stroke-width="1.7"/></svg>
<svg style="left:1793.90px;top:185.95px" width="21" height="20" viewBox="0 0 21 20" fill="none" stroke-linecap="round" stroke-linejoin="round" ><circle cx="7.50" cy="7.20" r="6.15" stroke="#5c5c5c" stroke-width="2.1"/><path d="M12.10 11.80L18.60 18.50" stroke="#5c5c5c" stroke-width="2.2" stroke-linecap="butt"/></svg>
<svg style="left:1842.10px;top:187.60px" width="23" height="23" viewBox="0 0 23 23" fill="none" stroke-linecap="round" stroke-linejoin="round" ><path d="M1.20 1.30H21.40L13.70 13.40V18.90L9.00 21.00V13.40Z" stroke="#5b606c" stroke-width="2" stroke-linejoin="miter"/></svg>
<svg style="left:0;top:0" width="1920" height="1066" viewBox="0 0 1920 1066"><path d="M402.00 192.00H404.10V205.00H402.00V194.10L398.70 196.30V194.20Z" fill="#4b5563"/><path d="M1438.80 345.60H1440.20V356.00H1438.80V347.15L1435.90 349.05V347.50ZM1580.60 345.60H1582.00V356.00H1580.60V347.15L1577.70 349.05V347.50ZM1586.80 345.60H1588.20V356.00H1586.80V347.15L1583.90 349.05V347.50ZM1438.80 407.68H1440.20V418.08H1438.80V409.23L1435.90 411.13V409.58ZM1580.60 407.68H1582.00V418.08H1580.60V409.23L1577.70 411.13V409.58ZM1586.80 407.68H1588.20V418.08H1586.80V409.23L1583.90 411.13V409.58ZM1438.80 469.76H1440.20V480.16H1438.80V471.31L1435.90 473.21V471.66ZM1580.60 469.76H1582.00V480.16H1580.60V471.31L1577.70 473.21V471.66ZM1586.80 469.76H1588.20V480.16H1586.80V471.31L1583.90 473.21V471.66ZM1438.80 531.84H1440.20V542.24H1438.80V533.39L1435.90 535.29V533.74ZM1580.60 531.84H1582.00V542.24H1580.60V533.39L1577.70 535.29V533.74ZM1586.80 531.84H1588.20V542.24H1586.80V533.39L1583.90 535.29V533.74ZM1438.80 593.92H1440.20V604.32H1438.80V595.47L1435.90 597.37V595.82ZM1580.60 593.92H1582.00V604.32H1580.60V595.47L1577.70 597.37V595.82ZM1586.80 593.92H1588.20V604.32H1586.80V595.47L1583.90 597.37V595.82ZM1438.80 656.00H1440.20V666.40H1438.80V657.55L1435.90 659.45V657.90ZM1580.60 656.00H1582.00V666.40H1580.60V657.55L1577.70 659.45V657.90ZM1586.80 656.00H1588.20V666.40H1586.80V657.55L1583.90 659.45V657.90ZM1438.80 718.08H1440.20V728.48H1438.80V719.63L1435.90 721.53V719.98ZM1580.60 718.08H1582.00V728.48H1580.60V719.63L1577.70 721.53V719.98ZM1586.80 718.08H1588.20V728.48H1586.80V719.63L1583.90 721.53V719.98ZM1438.80 780.16H1440.20V790.56H1438.80V781.71L1435.90 783.61V782.06ZM1580.60 780.16H1582.00V790.56H1580.60V781.71L1577.70 783.61V782.06ZM1586.80 780.16H1588.20V790.56H1586.80V781.71L1583.90 783.61V782.06ZM1438.80 842.24H1440.20V852.64H1438.80V843.79L1435.90 845.69V844.14ZM1580.60 842.24H1582.00V852.64H1580.60V843.79L1577.70 845.69V844.14ZM1438.80 904.32H1440.20V914.72H1438.80V905.87L1435.90 907.77V906.22ZM1580.60 904.32H1582.00V914.72H1580.60V905.87L1577.70 907.77V906.22ZM1438.80 966.40H1440.20V976.80H1438.80V967.95L1435.90 969.85V968.30ZM1580.60 966.40H1582.00V976.80H1580.60V967.95L1577.70 969.85V968.30ZM1438.80 1028.48H1440.20V1038.88H1438.80V1030.03L1435.90 1031.93V1030.38ZM1580.60 1028.48H1582.00V1038.88H1580.60V1030.03L1577.70 1031.93V1030.38ZM1586.80 1028.48H1588.20V1038.88H1586.80V1030.03L1583.90 1031.93V1030.38Z" fill="#111"/><path d="M839.80 407.33H841.90V419.03H839.80V409.23L836.80 411.23V409.33ZM847.40 407.33H849.50V419.03H847.40V409.23L844.40 411.23V409.33ZM839.80 469.41H841.90V481.11H839.80V471.31L836.80 473.31V471.41ZM806.40 966.05H808.50V977.75H806.40V967.95L803.40 969.95V968.05Z" fill="#0a0a0a"/></svg>
<svg style="left:0.00px;top:0.00px" width="1920" height="1066" viewBox="0 0 1920 1066" fill="none" stroke-linecap="round" stroke-linejoin="round" ><path d="M1903 494C1895 498 1885 502 1870 503C1853 503 1840 516 1840 533C1840 550 1853 563 1870 563C1885 564 1895 566 1903 570Z" fill="#e7deb6"/><circle cx="1870.4" cy="532.8" r="23.6" fill="#c4a42b"/><path d="M1868.8 545.3C1864 541 1860.2 536.5 1860.2 532C1860.2 529.5 1861.2 527.5 1862.5 526.2C1863.5 529.5 1865.5 531.5 1868.8 531.5C1872 531.5 1874.2 529.5 1875 526.2C1876.4 527.5 1877.4 529.5 1877.4 532C1877.4 536.5 1873.6 541 1868.8 545.3Z" fill="#150d05"/><path d="M1864.6 526.5C1864.2 531 1866 534.6 1868.8 534.6C1871.6 534.6 1873.4 531 1873 526.5" stroke="#e2c84f" stroke-width="1.5" fill="none"/><circle cx="1868.8" cy="531.7" r="2.6" fill="#150d05"/><path d="M1866 527L1865.6 523.6L1867.4 525.2L1868.8 522.8L1870.2 525.2L1872 523.6L1871.6 527Z" fill="#e6c431"/></svg>
<span class="t" style="left:1763.93px;top:25px;font-size:20.4px;line-height:22px;color:#000;transform:scaleX(0.9123);-webkit-text-stroke:0.5px #000;">A</span>
<span class="t" style="left:1810.46px;top:17px;font-size:16px;line-height:17px;color:#000;transform:scaleX(1.0503);-webkit-text-stroke:0.45px #000;">Admin</span>
<span class="t" style="left:1810.54px;top:37px;font-size:14.4px;line-height:16px;color:#9e9e9e;transform:scaleX(1.0465);-webkit-text-stroke:0.2px #9e9e9e;">Tenant</span>
<span class="t" style="left:300.73px;top:101px;font-size:18px;line-height:20px;color:#454c59;transform:scaleX(1.0121);-webkit-text-stroke:0.55px #454c59;">PMS</span>
<span class="t" style="left:361.24px;top:101px;font-size:18px;line-height:20px;color:#454c59;transform:scaleX(1.0912);-webkit-text-stroke:0.55px #454c59;">Manual</span>
<span class="t" style="left:318.24px;top:189px;font-size:18px;line-height:20px;color:#4b5563;transform:scaleX(1.0877);-webkit-text-stroke:0.5px #4b5563;">Listings (</span>
<span class="t" style="left:406.15px;top:189px;font-size:18px;line-height:20px;color:#4b5563;transform:scaleX(1.1030);-webkit-text-stroke:0.5px #4b5563;">08)</span>
<span class="t" style="left:1407.86px;top:190px;font-size:16.2px;line-height:18px;color:#1c1c20;transform:scaleX(1.0747);-webkit-text-stroke:0.4px #1c1c20;">Import new listings..</span>
<span class="t" style="left:1603.72px;top:190px;font-size:16.2px;line-height:18px;color:#6a6b70;transform:scaleX(1.0424);-webkit-text-stroke:0.15px #6a6b70;">Search</span>
<span class="t" style="left:318.82px;top:272px;font-size:16px;line-height:17px;color:#4b5563;transform:scaleX(1.0685);-webkit-text-stroke:0.5px #4b5563;">Status</span>
<span class="t" style="left:426.88px;top:272px;font-size:16px;line-height:17px;color:#4b5563;transform:scaleX(1.1191);-webkit-text-stroke:0.5px #4b5563;">Listing</span>
<span class="t" style="left:1022.35px;top:272px;font-size:16px;line-height:17px;color:#4b5563;transform:scaleX(1.0545);-webkit-text-stroke:0.5px #4b5563;">Elev8 AI Status</span>
<span class="t" style="left:1197.07px;top:272px;font-size:16px;line-height:17px;color:#4b5563;transform:scaleX(1.0609);-webkit-text-stroke:0.5px #4b5563;">Check In/Out Steps</span>
<span class="t" style="left:1415.17px;top:256px;font-size:16px;line-height:17px;color:#4b5563;transform:scaleX(1.0290);-webkit-text-stroke:0.5px #4b5563;">User</span>
<span class="t" style="left:1398.94px;top:288px;font-size:16px;line-height:17px;color:#4b5563;transform:scaleX(1.0860);-webkit-text-stroke:0.5px #4b5563;">Incharge</span>
<span class="t" style="left:1549.72px;top:256px;font-size:16px;line-height:17px;color:#4b5563;transform:scaleX(1.0784);-webkit-text-stroke:0.5px #4b5563;">Upsell</span>
<span class="t" style="left:1538.07px;top:288px;font-size:16px;line-height:17px;color:#4b5563;transform:scaleX(1.0851);-webkit-text-stroke:0.5px #4b5563;">Assigned</span>
<span class="t" style="left:1686.36px;top:272px;font-size:16px;line-height:17px;color:#4b5563;transform:scaleX(1.0834);-webkit-text-stroke:0.5px #4b5563;">Cleaning</span>
<span class="t" style="left:31.78px;top:108px;font-size:18px;line-height:20px;color:#1f2937;transform:scaleX(1.0581);font-weight:700;">Main</span>
<span class="t" style="left:31.73px;top:451px;font-size:18px;line-height:20px;color:#1f2937;transform:scaleX(1.0151);font-weight:700;">Extras</span>
<span class="t" style="left:60.92px;top:151px;font-size:15.8px;line-height:17px;color:#1f2937;transform:scaleX(1.0781);-webkit-text-stroke:0.55px #1f2937;">Dashboard</span>
<span class="t" style="left:60.92px;top:201px;font-size:15.8px;line-height:17px;color:#1f2937;transform:scaleX(1.0780);-webkit-text-stroke:0.55px #1f2937;">Reservations</span>
<span class="t" style="left:60.90px;top:250px;font-size:15.8px;line-height:17px;color:#1f2937;transform:scaleX(1.1043);-webkit-text-stroke:0.55px #1f2937;">Listings</span>
<span class="t" style="left:61.47px;top:300px;font-size:15.8px;line-height:17px;color:#1f2937;transform:scaleX(1.0547);-webkit-text-stroke:0.55px #1f2937;">Orders</span>
<span class="t" style="left:61.47px;top:350px;font-size:15.8px;line-height:17px;color:#1f2937;transform:scaleX(1.0682);-webkit-text-stroke:0.55px #1f2937;">Stripe Payment</span>
<span class="t" style="left:60.92px;top:400px;font-size:15.8px;line-height:17px;color:#1f2937;transform:scaleX(1.0832);-webkit-text-stroke:0.55px #1f2937;">Upsells</span>
<span class="t" style="left:61.46px;top:495px;font-size:15.8px;line-height:17px;color:#1f2937;transform:scaleX(1.0734);-webkit-text-stroke:0.55px #1f2937;">Cleanings</span>
<span class="t" style="left:62.00px;top:544px;font-size:15.8px;line-height:17px;color:#1f2937;transform:scaleX(1.0750);-webkit-text-stroke:0.55px #1f2937;">Tasks</span>
<span class="t" style="left:60.92px;top:594px;font-size:15.8px;line-height:17px;color:#1f2937;transform:scaleX(1.0750);-webkit-text-stroke:0.55px #1f2937;">Users</span>
<span class="t" style="left:60.91px;top:643px;font-size:15.8px;line-height:17px;color:#1f2937;transform:scaleX(1.0911);-webkit-text-stroke:0.55px #1f2937;">Branding</span>
<span class="t" style="left:62.28px;top:693px;font-size:15.8px;line-height:17px;color:#1f2937;transform:scaleX(1.1149);-webkit-text-stroke:0.55px #1f2937;">Activities</span>
<span class="t" style="left:62.27px;top:743px;font-size:15.8px;line-height:17px;color:#1f2937;transform:scaleX(1.0826);-webkit-text-stroke:0.55px #1f2937;">Attendances</span>
<span class="t" style="left:61.46px;top:792px;font-size:15.8px;line-height:17px;color:#1f2937;transform:scaleX(1.0844);-webkit-text-stroke:0.55px #1f2937;">Settings</span>
<span class="t" style="left:106.17px;top:64px;font-size:12.4px;line-height:14px;color:#1a1a1a;letter-spacing:4.532px;transform:scaleX(0.84);font-weight:700;">ELEVATE</span>
<span class="t" style="left:426.75px;top:343px;font-size:16px;line-height:17px;color:#0a0a0a;transform:scaleX(1.0037);-webkit-text-stroke:0.3px #0a0a0a;">ID - THE R APARTMENTS</span>
<span class="t" style="left:621.36px;top:343px;font-size:16px;line-height:17px;color:#0a0a0a;transform:scaleX(1.0757);-webkit-text-stroke:0.3px #0a0a0a;">Mezzanine w/ balcony| APT 8</span>
<span class="t" style="left:1051.66px;top:344px;font-size:14px;line-height:16px;color:#000;transform:scaleX(0.9398);-webkit-text-stroke:0.15px #000;">RESPONDING</span>
<span class="t" style="left:1232.05px;top:343px;font-size:14px;line-height:16px;color:#111;transform:scaleX(1.0963);">0</span>
<span class="t" style="left:1317.25px;top:343px;font-size:14px;line-height:16px;color:#111;transform:scaleX(1.0963);">0</span>
<span class="t" style="left:1441.40px;top:343px;font-size:14px;line-height:16px;color:#111;transform:scaleX(1.0615);">5</span>
<span class="t" style="left:1699.40px;top:343px;font-size:14.4px;line-height:16px;color:#0c0c0c;transform:scaleX(1.0733);-webkit-text-stroke:0.15px #0c0c0c;">Cleaning</span>
<span class="t" style="left:426.75px;top:405px;font-size:16px;line-height:17px;color:#0a0a0a;transform:scaleX(1.0037);-webkit-text-stroke:0.3px #0a0a0a;">ID - THE R APARTMENTS</span>
<span class="t" style="left:621.36px;top:405px;font-size:16px;line-height:17px;color:#0a0a0a;transform:scaleX(1.0742);-webkit-text-stroke:0.3px #0a0a0a;">Mezzanine w/ balcony| APT</span>
<span class="t" style="left:1051.66px;top:406px;font-size:14px;line-height:16px;color:#000;transform:scaleX(0.9398);-webkit-text-stroke:0.15px #000;">RESPONDING</span>
<span class="t" style="left:1232.05px;top:405px;font-size:14px;line-height:16px;color:#111;transform:scaleX(1.0963);">0</span>
<span class="t" style="left:1317.25px;top:405px;font-size:14px;line-height:16px;color:#111;transform:scaleX(1.0963);">0</span>
<span class="t" style="left:1441.37px;top:405px;font-size:14px;line-height:16px;color:#111;transform:scaleX(1.1040);">2</span>
<span class="t" style="left:1699.40px;top:405px;font-size:14.4px;line-height:16px;color:#0c0c0c;transform:scaleX(1.0733);-webkit-text-stroke:0.15px #0c0c0c;">Cleaning</span>
<span class="t" style="left:426.75px;top:467px;font-size:16px;line-height:17px;color:#0a0a0a;transform:scaleX(1.0037);-webkit-text-stroke:0.3px #0a0a0a;">ID - THE R APARTMENTS</span>
<span class="t" style="left:621.36px;top:467px;font-size:16px;line-height:17px;color:#0a0a0a;transform:scaleX(1.0742);-webkit-text-stroke:0.3px #0a0a0a;">Mezzanine w/ balcony| APT</span>
<span class="t" style="left:843.55px;top:467px;font-size:16px;line-height:17px;color:#0a0a0a;transform:scaleX(1.1000);-webkit-text-stroke:0.3px #0a0a0a;">0</span>
<span class="t" style="left:1051.66px;top:468px;font-size:14px;line-height:16px;color:#000;transform:scaleX(0.9398);-webkit-text-stroke:0.15px #000;">RESPONDING</span>
<span class="t" style="left:1232.05px;top:467px;font-size:14px;line-height:16px;color:#111;transform:scaleX(1.0963);">0</span>
<span class="t" style="left:1317.25px;top:467px;font-size:14px;line-height:16px;color:#111;transform:scaleX(1.0963);">0</span>
<span class="t" style="left:1441.37px;top:467px;font-size:14px;line-height:16px;color:#111;transform:scaleX(1.1040);">2</span>
<span class="t" style="left:1699.40px;top:467px;font-size:14.4px;line-height:16px;color:#0c0c0c;transform:scaleX(1.0733);-webkit-text-stroke:0.15px #0c0c0c;">Cleaning</span>
<span class="t" style="left:426.75px;top:529px;font-size:16px;line-height:17px;color:#0a0a0a;transform:scaleX(1.0037);-webkit-text-stroke:0.3px #0a0a0a;">ID - THE R APARTMENTS</span>
<span class="t" style="left:621.35px;top:529px;font-size:16px;line-height:17px;color:#0a0a0a;transform:scaleX(1.0781);-webkit-text-stroke:0.3px #0a0a0a;">Mezzanine w/ balcony| APT 9</span>
<span class="t" style="left:1051.66px;top:530px;font-size:14px;line-height:16px;color:#000;transform:scaleX(0.9398);-webkit-text-stroke:0.15px #000;">RESPONDING</span>
<span class="t" style="left:1232.05px;top:529px;font-size:14px;line-height:16px;color:#111;transform:scaleX(1.0963);">0</span>
<span class="t" style="left:1317.25px;top:529px;font-size:14px;line-height:16px;color:#111;transform:scaleX(1.0963);">0</span>
<span class="t" style="left:1441.96px;top:529px;font-size:14px;line-height:16px;color:#111;transform:scaleX(0.9517);">4</span>
<span class="t" style="left:1699.40px;top:529px;font-size:14.4px;line-height:16px;color:#0c0c0c;transform:scaleX(1.0733);-webkit-text-stroke:0.15px #0c0c0c;">Cleaning</span>
<span class="t" style="left:426.75px;top:591px;font-size:16px;line-height:17px;color:#0a0a0a;transform:scaleX(1.0037);-webkit-text-stroke:0.3px #0a0a0a;">ID - THE R APARTMENTS</span>
<span class="t" style="left:622.17px;top:591px;font-size:16px;line-height:17px;color:#0a0a0a;transform:scaleX(1.0618);-webkit-text-stroke:0.3px #0a0a0a;">Studio| APT 6</span>
<span class="t" style="left:1051.66px;top:592px;font-size:14px;line-height:16px;color:#000;transform:scaleX(0.9398);-webkit-text-stroke:0.15px #000;">RESPONDING</span>
<span class="t" style="left:1232.05px;top:591px;font-size:14px;line-height:16px;color:#111;transform:scaleX(1.0963);">0</span>
<span class="t" style="left:1317.25px;top:591px;font-size:14px;line-height:16px;color:#111;transform:scaleX(1.0963);">0</span>
<span class="t" style="left:1441.96px;top:591px;font-size:14px;line-height:16px;color:#111;transform:scaleX(0.9517);">4</span>
<span class="t" style="left:1699.40px;top:591px;font-size:14.4px;line-height:16px;color:#0c0c0c;transform:scaleX(1.0733);-webkit-text-stroke:0.15px #0c0c0c;">Cleaning</span>
<span class="t" style="left:426.75px;top:653px;font-size:16px;line-height:17px;color:#0a0a0a;transform:scaleX(1.0037);-webkit-text-stroke:0.3px #0a0a0a;">ID - THE R APARTMENTS</span>
<span class="t" style="left:622.17px;top:653px;font-size:16px;line-height:17px;color:#0a0a0a;transform:scaleX(1.0566);-webkit-text-stroke:0.3px #0a0a0a;">Studio| APT 7</span>
<span class="t" style="left:1051.66px;top:654px;font-size:14px;line-height:16px;color:#000;transform:scaleX(0.9398);-webkit-text-stroke:0.15px #000;">RESPONDING</span>
<span class="t" style="left:1232.05px;top:653px;font-size:14px;line-height:16px;color:#111;transform:scaleX(1.0963);">0</span>
<span class="t" style="left:1317.25px;top:653px;font-size:14px;line-height:16px;color:#111;transform:scaleX(1.0963);">0</span>
<span class="t" style="left:1441.40px;top:653px;font-size:14px;line-height:16px;color:#111;transform:scaleX(1.0615);">5</span>
<span class="t" style="left:1699.40px;top:653px;font-size:14.4px;line-height:16px;color:#0c0c0c;transform:scaleX(1.0733);-webkit-text-stroke:0.15px #0c0c0c;">Cleaning</span>
<span class="t" style="left:426.75px;top:715px;font-size:16px;line-height:17px;color:#0a0a0a;transform:scaleX(1.0037);-webkit-text-stroke:0.3px #0a0a0a;">ID - THE R APARTMENTS</span>
<span class="t" style="left:622.17px;top:715px;font-size:16px;line-height:17px;color:#0a0a0a;transform:scaleX(1.0618);-webkit-text-stroke:0.3px #0a0a0a;">Studio| APT 5</span>
<span class="t" style="left:1051.66px;top:716px;font-size:14px;line-height:16px;color:#000;transform:scaleX(0.9398);-webkit-text-stroke:0.15px #000;">RESPONDING</span>
<span class="t" style="left:1232.05px;top:716px;font-size:14px;line-height:16px;color:#111;transform:scaleX(1.0963);">0</span>
<span class="t" style="left:1317.25px;top:716px;font-size:14px;line-height:16px;color:#111;transform:scaleX(1.0963);">0</span>
<span class="t" style="left:1441.40px;top:716px;font-size:14px;line-height:16px;color:#111;transform:scaleX(1.0615);">5</span>
<span class="t" style="left:1699.40px;top:716px;font-size:14.4px;line-height:16px;color:#0c0c0c;transform:scaleX(1.0733);-webkit-text-stroke:0.15px #0c0c0c;">Cleaning</span>
<span class="t" style="left:426.75px;top:778px;font-size:16px;line-height:17px;color:#0a0a0a;transform:scaleX(1.0037);-webkit-text-stroke:0.3px #0a0a0a;">ID - THE R APARTMENTS</span>
<span class="t" style="left:622.17px;top:778px;font-size:16px;line-height:17px;color:#0a0a0a;transform:scaleX(1.0642);-webkit-text-stroke:0.3px #0a0a0a;">Studio| APT 4</span>
<span class="t" style="left:1051.66px;top:779px;font-size:14px;line-height:16px;color:#000;transform:scaleX(0.9398);-webkit-text-stroke:0.15px #000;">RESPONDING</span>
<span class="t" style="left:1232.05px;top:778px;font-size:14px;line-height:16px;color:#111;transform:scaleX(1.0963);">0</span>
<span class="t" style="left:1317.25px;top:778px;font-size:14px;line-height:16px;color:#111;transform:scaleX(1.0963);">0</span>
<span class="t" style="left:1441.96px;top:778px;font-size:14px;line-height:16px;color:#111;transform:scaleX(0.9517);">4</span>
<span class="t" style="left:1699.40px;top:778px;font-size:14.4px;line-height:16px;color:#0c0c0c;transform:scaleX(1.0733);-webkit-text-stroke:0.15px #0c0c0c;">Cleaning</span>
<span class="t" style="left:426.75px;top:840px;font-size:16px;line-height:17px;color:#0a0a0a;transform:scaleX(1.0037);-webkit-text-stroke:0.3px #0a0a0a;">ID - THE R APARTMENTS</span>
<span class="t" style="left:621.37px;top:840px;font-size:16px;line-height:17px;color:#0a0a0a;transform:scaleX(1.0646);-webkit-text-stroke:0.3px #0a0a0a;">Mezzanine Studio| APT 3</span>
<span class="t" style="left:1051.66px;top:841px;font-size:14px;line-height:16px;color:#000;transform:scaleX(0.9398);-webkit-text-stroke:0.15px #000;">RESPONDING</span>
<span class="t" style="left:1232.05px;top:840px;font-size:14px;line-height:16px;color:#111;transform:scaleX(1.0963);">0</span>
<span class="t" style="left:1317.25px;top:840px;font-size:14px;line-height:16px;color:#111;transform:scaleX(1.0963);">0</span>
<span class="t" style="left:1441.40px;top:840px;font-size:14px;line-height:16px;color:#111;transform:scaleX(1.0615);">5</span>
<span class="t" style="left:1583.12px;top:840px;font-size:14px;line-height:16px;color:#111;transform:scaleX(1.0400);">2</span>
<span class="t" style="left:1699.40px;top:840px;font-size:14.4px;line-height:16px;color:#0c0c0c;transform:scaleX(1.0733);-webkit-text-stroke:0.15px #0c0c0c;">Cleaning</span>
<span class="t" style="left:426.75px;top:902px;font-size:16px;line-height:17px;color:#0a0a0a;transform:scaleX(1.0037);-webkit-text-stroke:0.3px #0a0a0a;">ID - THE R APARTMENTS</span>
<span class="t" style="left:621.37px;top:902px;font-size:16px;line-height:17px;color:#0a0a0a;transform:scaleX(1.0646);-webkit-text-stroke:0.3px #0a0a0a;">Mezzanine Studio| APT 2</span>
<span class="t" style="left:1051.66px;top:903px;font-size:14px;line-height:16px;color:#000;transform:scaleX(0.9398);-webkit-text-stroke:0.15px #000;">RESPONDING</span>
<span class="t" style="left:1232.05px;top:902px;font-size:14px;line-height:16px;color:#111;transform:scaleX(1.0963);">0</span>
<span class="t" style="left:1317.25px;top:902px;font-size:14px;line-height:16px;color:#111;transform:scaleX(1.0963);">0</span>
<span class="t" style="left:1441.37px;top:902px;font-size:14px;line-height:16px;color:#111;transform:scaleX(1.1040);">2</span>
<span class="t" style="left:1583.12px;top:902px;font-size:14px;line-height:16px;color:#111;transform:scaleX(1.0400);">2</span>
<span class="t" style="left:1699.40px;top:902px;font-size:14.4px;line-height:16px;color:#0c0c0c;transform:scaleX(1.0733);-webkit-text-stroke:0.15px #0c0c0c;">Cleaning</span>
<span class="t" style="left:426.75px;top:964px;font-size:16px;line-height:17px;color:#0a0a0a;transform:scaleX(1.0037);-webkit-text-stroke:0.3px #0a0a0a;">ID - THE R APARTMENTS</span>
<span class="t" style="left:621.36px;top:964px;font-size:16px;line-height:17px;color:#0a0a0a;transform:scaleX(1.0687);-webkit-text-stroke:0.3px #0a0a0a;">Mezzanine Studio| APT</span>
<span class="t" style="left:1051.66px;top:965px;font-size:14px;line-height:16px;color:#000;transform:scaleX(0.9398);-webkit-text-stroke:0.15px #000;">RESPONDING</span>
<span class="t" style="left:1232.05px;top:964px;font-size:14px;line-height:16px;color:#111;transform:scaleX(1.0963);">0</span>
<span class="t" style="left:1317.25px;top:964px;font-size:14px;line-height:16px;color:#111;transform:scaleX(1.0963);">0</span>
<span class="t" style="left:1441.96px;top:964px;font-size:14px;line-height:16px;color:#111;transform:scaleX(0.9517);">4</span>
<span class="t" style="left:1583.12px;top:964px;font-size:14px;line-height:16px;color:#111;transform:scaleX(1.0400);">2</span>
<span class="t" style="left:1699.40px;top:964px;font-size:14.4px;line-height:16px;color:#0c0c0c;transform:scaleX(1.0733);-webkit-text-stroke:0.15px #0c0c0c;">Cleaning</span>
<span class="t" style="left:426.71px;top:1026px;font-size:16px;line-height:17px;color:#0a0a0a;transform:scaleX(1.0289);-webkit-text-stroke:0.3px #0a0a0a;">ID - MASURAI| Pererenan the R Villa Masurai – 2BR Pool w/ Cinema</span>
<span class="t" style="left:1051.66px;top:1027px;font-size:14px;line-height:16px;color:#000;transform:scaleX(0.9398);-webkit-text-stroke:0.15px #000;">RESPONDING</span>
<span class="t" style="left:1232.05px;top:1026px;font-size:14px;line-height:16px;color:#111;transform:scaleX(1.0963);">0</span>
<span class="t" style="left:1317.25px;top:1026px;font-size:14px;line-height:16px;color:#111;transform:scaleX(1.0963);">0</span>
<span class="t" style="left:1441.37px;top:1026px;font-size:14px;line-height:16px;color:#111;transform:scaleX(1.1040);">7</span>
<span class="t" style="left:1699.40px;top:1026px;font-size:14.4px;line-height:16px;color:#0c0c0c;transform:scaleX(1.0733);-webkit-text-stroke:0.15px #0c0c0c;">Cleaning</span>
<span class="t" style="left:892.55px;top:293px;font-size:14px;line-height:16px;color:#fff;transform:scaleX(1.0014);z-index:5;">Guest Guide QR Code</span>
</div>
</body></html>
